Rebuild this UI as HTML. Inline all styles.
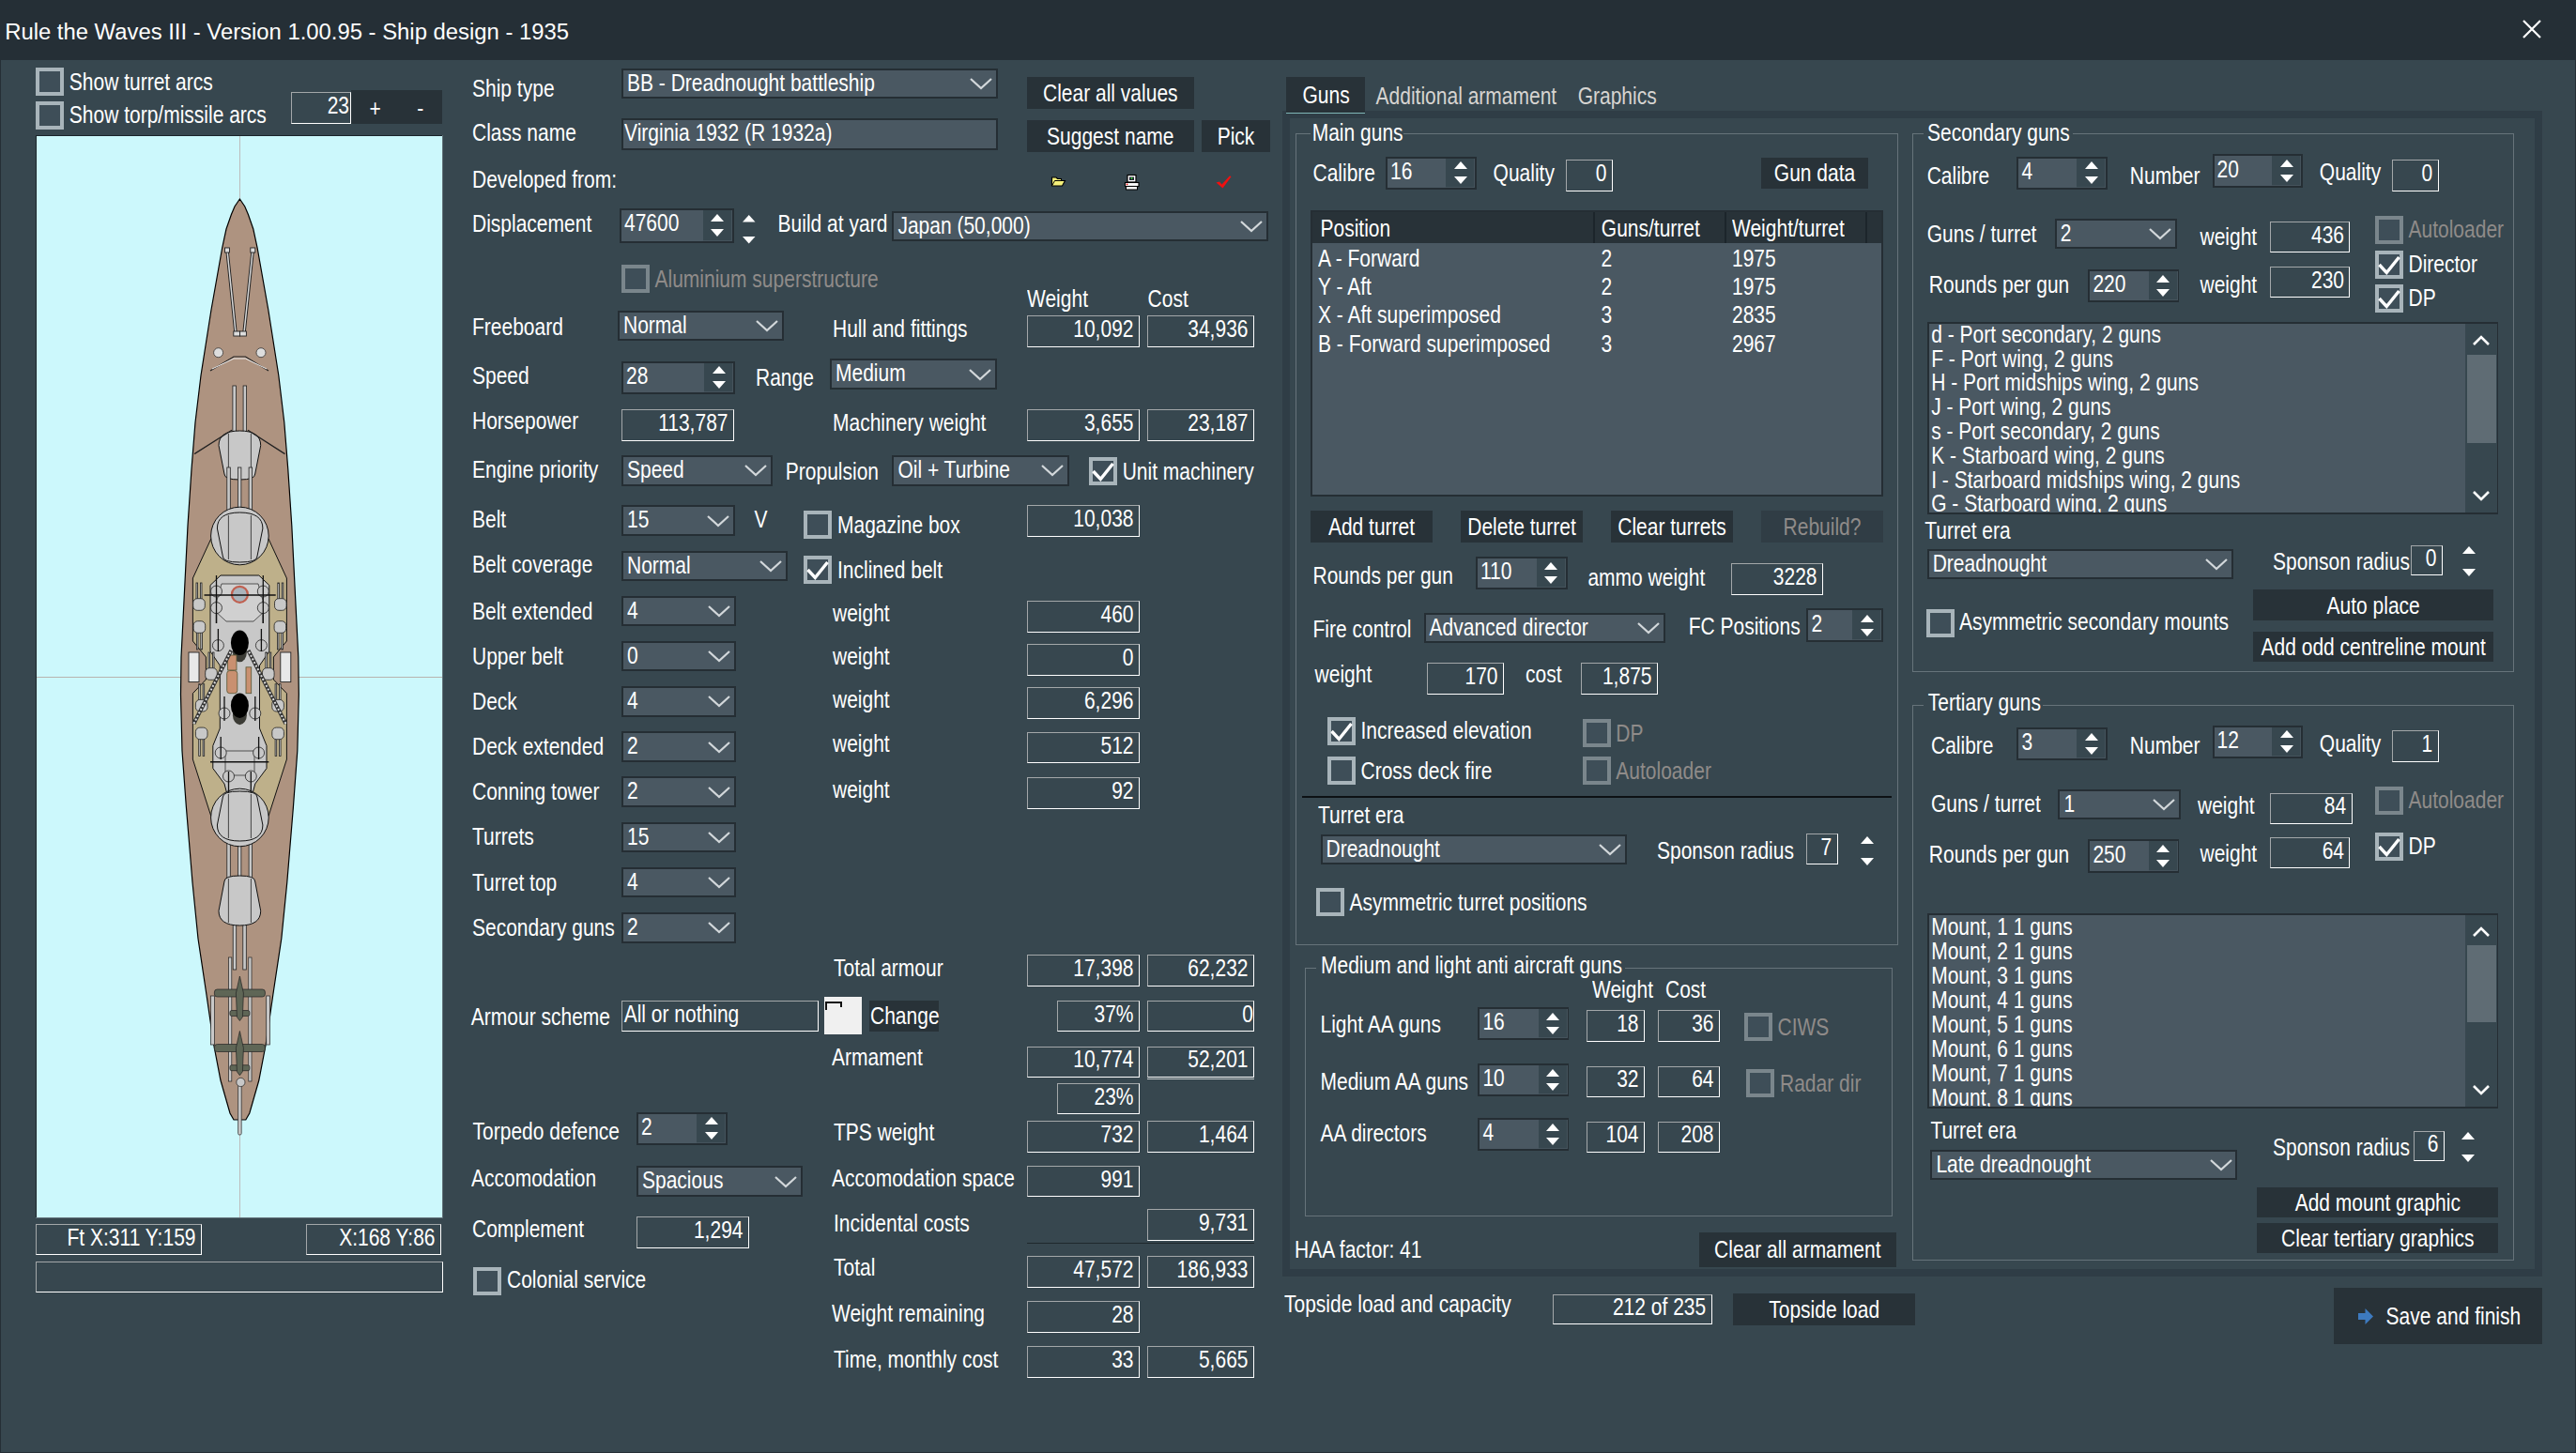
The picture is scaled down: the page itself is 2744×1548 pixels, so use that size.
<!DOCTYPE html>
<html><head><meta charset="utf-8"><style>
html,body{margin:0;padding:0;width:2744px;height:1548px;overflow:hidden;background:#37474f;font-family:"Liberation Sans",sans-serif}
.r{position:absolute;box-sizing:border-box}
.t{position:absolute;white-space:pre}
svg.r{overflow:visible}
</style></head><body>
<div class="r" style="left:0.0px;top:0.0px;width:2744.0px;height:64.0px;background:#252f36;"></div>
<div class="r" style="left:0.0px;top:64.0px;width:1.0px;height:1484.0px;background:#252f36;"></div>
<div class="r" style="left:2743.0px;top:64.0px;width:1.0px;height:1484.0px;background:#252f36;"></div>
<div class="r" style="left:0.0px;top:1547.0px;width:2744.0px;height:1.0px;background:#252f36;"></div>
<div class="t" style="left:5.2px;top:21.6px;color:#fff;font-size:23.85px;line-height:24px;transform-origin:0 20.3px;transform:scaleY(1.0)">Rule the Waves III - Version 1.00.95 - Ship design - 1935</div>
<svg class="r" style="left:2687px;top:21px" width="20" height="20"><path d="M1,1 L19,19 M19,1 L1,19" stroke="#fff" stroke-width="2.2"/></svg>
<div class="r" style="left:38.0px;top:72.0px;width:30.0px;height:30.0px;background:#3e4e58;border:4px solid #a8b4ba;"></div>
<div class="t" style="left:73.8px;top:76.5px;color:#fff;font-size:21px;line-height:24px;transform-origin:0 19.3px;transform:scaleY(1.2)">Show turret arcs</div>
<div class="r" style="left:38.0px;top:108.0px;width:30.0px;height:30.0px;background:#3e4e58;border:4px solid #a8b4ba;"></div>
<div class="t" style="left:73.8px;top:112.3px;color:#fff;font-size:21px;line-height:24px;transform-origin:0 19.3px;transform:scaleY(1.2)">Show torp/missile arcs</div>
<div class="r" style="left:373.8px;top:95.8px;width:97.7px;height:35.8px;background:#283238;"></div>
<div class="r" style="left:310.0px;top:98.0px;width:64.0px;height:33.6px;border:1px solid #fff;border-top-color:#a3a7a9;border-left-color:#a3a7a9"></div>
<div class="t" style="left:-228.0px;width:600px;text-align:right;top:101.7px;color:#fff;font-size:21px;line-height:24px;transform-origin:0 19.3px;transform:scaleY(1.2)">23</div>
<div class="t" style="left:99.7px;width:600px;text-align:center;top:104.7px;color:#fff;font-size:21px;line-height:24px;transform-origin:0 19.3px;transform:scaleY(1.2)">+</div>
<div class="t" style="left:147.8px;width:600px;text-align:center;top:104.7px;color:#fff;font-size:21px;line-height:24px;transform-origin:0 19.3px;transform:scaleY(1.2)">-</div>
<div class="r" style="left:38px;top:144px;width:434px;height:1154px;background:#5f6f77"></div>
<div class="r" style="left:38px;top:144px;width:433px;height:1153px;background:#1a242a"></div>
<div class="r" style="left:39px;top:145px;width:432px;height:1152px;background:#ccf8fc"></div>
<div class="r" style="left:39px;top:720.5px;width:432px;height:1px;background:#b8b4ae"></div>
<div class="r" style="left:254.9px;top:145px;width:1px;height:1152px;background:#bcbcbc"></div>
<svg class="r" style="left:0;top:0" width="2744" height="1548">
<path d="M255.4,212.0 L250.0,220.0 L246.4,228.5 L241.0,244.0 L236.7,264.0 L225.0,330.0 L214.0,400.0 L208.0,450.0 L204.0,500.0 L200.0,560.0 L196.5,630.0 L193.0,700.0 L192.5,740.0 L194.0,800.0 L198.4,860.0 L205.0,940.0 L211.0,1000.0 L220.0,1060.0 L227.7,1113.0 L235.0,1151.0 L241.0,1172.0 L245.0,1186.0 L249.0,1193.0 L261.8,1193.0 L265.8,1186.0 L269.8,1172.0 L275.8,1151.0 L283.1,1113.0 L290.8,1060.0 L299.8,1000.0 L305.8,940.0 L312.4,860.0 L316.8,800.0 L318.3,740.0 L317.8,700.0 L314.3,630.0 L310.8,560.0 L306.8,500.0 L302.8,450.0 L296.8,400.0 L285.8,330.0 L274.1,264.0 L269.8,244.0 L264.4,228.5 L260.8,220.0 L255.4,212.0 Z" fill="#ae9380" stroke="#000" stroke-width="1.2"/>
<path d="M224.8,574.0 L205.4,616.0 L205.4,683.0 L219.4,700.0 L219.4,724.0 L205.4,738.7 L205.4,809.0 L224.8,869.5 L286.0,869.5 L305.4,809.0 L305.4,738.7 L291.4,724.0 L291.4,700.0 L305.4,683.0 L305.4,616.0 L286.0,574.0 Z" fill="#beb08a" stroke="#111" stroke-width="1"/>
<path d="M235.0,613.0 L224.0,623.5 L224.0,694.0 L234.3,709.0 L234.3,776.0 L226.8,794.5 L226.8,818.6 L239.0,835.0 L243.0,850.0 L267.8,850.0 L271.8,835.0 L284.0,818.6 L284.0,794.5 L276.5,776.0 L276.5,709.0 L286.8,694.0 L286.8,623.5 L275.8,613.0 Z" fill="#c8c8c8" stroke="#111" stroke-width="1"/>
<path d="M236,622 L275,622 L283,650 L270,662 L241,662 L228,650 Z" fill="#d0d0d0" stroke="#333" stroke-width="0.8"/>
<rect x="240" y="800" width="31" height="26" fill="none" stroke="#333" stroke-width="0.8"/>
<path d="M224,811.7 L286.3,811.7" stroke="#111" stroke-width="1.5"/>
<rect x="247.9" y="411.0" width="3.5" height="54.0" fill="#c8c8c8" stroke="#222" stroke-width="0.8"/><rect x="259.1" y="411.0" width="3.5" height="54.0" fill="#c8c8c8" stroke="#222" stroke-width="0.8"/>
<path d="M233,474.6 Q233,459 255.4,459 Q277.7,459 277.7,474.6 L271.7,505 Q271.7,511 255.4,511 Q239,511 239,505 Z" fill="#c8c8c8" stroke="#111" stroke-width="1"/><line x1="243.4" y1="462" x2="243.4" y2="508" stroke="#222" stroke-width="0.8"/><line x1="267.4" y1="462" x2="267.4" y2="508" stroke="#222" stroke-width="0.8"/>
<rect x="241.8" y="498.0" width="3.5" height="50.0" fill="#c8c8c8" stroke="#222" stroke-width="0.8"/><rect x="253.4" y="498.0" width="3.5" height="50.0" fill="#c8c8c8" stroke="#222" stroke-width="0.8"/><rect x="265.1" y="498.0" width="3.5" height="50.0" fill="#c8c8c8" stroke="#222" stroke-width="0.8"/>
<circle cx="255.4" cy="571" r="30.8" fill="#c8c8c8" stroke="#111" stroke-width="1"/>
<path d="M231.4,563.0 Q231.4,546 255.4,546 Q279.9,546 279.9,563.0 L273.9,593 Q273.9,599 255.4,599 Q237.4,599 237.4,593 Z" fill="#c8c8c8" stroke="#111" stroke-width="1"/><line x1="243.4" y1="549" x2="243.4" y2="596" stroke="#222" stroke-width="0.8"/><line x1="267.4" y1="549" x2="267.4" y2="596" stroke="#222" stroke-width="0.8"/>
<rect x="241.8" y="892.0" width="3.5" height="52.0" fill="#c8c8c8" stroke="#222" stroke-width="0.8"/><rect x="253.4" y="892.0" width="3.5" height="52.0" fill="#c8c8c8" stroke="#222" stroke-width="0.8"/><rect x="265.1" y="892.0" width="3.5" height="52.0" fill="#c8c8c8" stroke="#222" stroke-width="0.8"/>
<circle cx="255.4" cy="871" r="30.8" fill="#c8c8c8" stroke="#111" stroke-width="1"/>
<path d="M231.4,879.0 Q231.4,896 255.4,896 Q279.9,896 279.9,879.0 L273.9,849 Q273.9,843 255.4,843 Q237.4,843 237.4,849 Z" fill="#c8c8c8" stroke="#111" stroke-width="1"/><line x1="243.4" y1="846" x2="243.4" y2="893" stroke="#222" stroke-width="0.8"/><line x1="267.4" y1="846" x2="267.4" y2="893" stroke="#222" stroke-width="0.8"/>
<rect x="248.2" y="980.0" width="3.5" height="53.0" fill="#c8c8c8" stroke="#222" stroke-width="0.8"/><rect x="258.8" y="980.0" width="3.5" height="53.0" fill="#c8c8c8" stroke="#222" stroke-width="0.8"/>
<path d="M233,970.4 Q233,986 255.4,986 Q277.7,986 277.7,970.4 L271.7,939 Q271.7,933 255.4,933 Q239,933 239,939 Z" fill="#c8c8c8" stroke="#111" stroke-width="1"/><line x1="243.4" y1="936" x2="243.4" y2="983" stroke="#222" stroke-width="0.8"/><line x1="267.4" y1="936" x2="267.4" y2="983" stroke="#222" stroke-width="0.8"/>
<path d="M242,266.7 L251,354.5 M269.2,266.7 L260,354.5" stroke="#222" stroke-width="3.4" fill="none"/><path d="M242,266.7 L251,354.5 M269.2,266.7 L260,354.5" stroke="#d8d8d8" stroke-width="1.5" fill="none"/>
<rect x="239.5" y="264" width="5" height="5" fill="#ddd" stroke="#222" stroke-width="0.9"/><rect x="266.8" y="264" width="5" height="5" fill="#ddd" stroke="#222" stroke-width="0.9"/><rect x="248.8" y="353" width="6.7" height="5" fill="#ddd" stroke="#222" stroke-width="0.9"/><rect x="255.5" y="353" width="6.9" height="5" fill="#ddd" stroke="#222" stroke-width="0.9"/>
<circle cx="232.6" cy="375.7" r="5" fill="#ddd" stroke="#333" stroke-width="0.8"/><circle cx="278" cy="375.7" r="5" fill="#ddd" stroke="#333" stroke-width="0.8"/>
<path d="M224,395 L249,380 L261.5,380 L286,395" stroke="#222" stroke-width="1.2" fill="none"/><path d="M226,393 L249,382 L261.5,382 L284,393" stroke="#eee" stroke-width="1" fill="none"/>
<path d="M207,483.6 L247,458.3 M303.5,483.6 L264,458.3" stroke="#222" stroke-width="1.3" fill="none"/>
<circle cx="255.4" cy="633.3" r="8.5" fill="#aab4bc" stroke="#c06050" stroke-width="2.2"/>
<ellipse cx="255.4" cy="694.8" rx="7.5" ry="10.5" fill="#3b3b35"/><ellipse cx="255.4" cy="684.8" rx="9.5" ry="13.2" fill="#000"/>
<ellipse cx="255.4" cy="761.7" rx="7.5" ry="10.5" fill="#3b3b35"/><ellipse cx="255.4" cy="751.7" rx="9.5" ry="13.2" fill="#000"/>
<rect x="242.6" y="698" width="9.4" height="16" fill="#c99070" stroke="#553" stroke-width="0.8"/><rect x="241.7" y="714.5" width="11.1" height="24.2" rx="3" fill="#c99070" stroke="#553" stroke-width="0.8"/><rect x="262" y="710.8" width="5.7" height="27.9" fill="#c99070" stroke="#553" stroke-width="0.8"/>
<rect x="209.0" y="621.0" width="1.6" height="19.0" fill="#c8c8c8" stroke="#222" stroke-width="0.8"/><rect x="213.4" y="621.0" width="1.6" height="19.0" fill="#c8c8c8" stroke="#222" stroke-width="0.8"/>
<rect x="205.7" y="637.7" width="12.6" height="12.6" rx="4.5" fill="#c8c8c8" stroke="#222" stroke-width="0.8"/>
<rect x="209.4" y="672.0" width="1.6" height="20.0" fill="#c8c8c8" stroke="#222" stroke-width="0.8"/><rect x="213.8" y="672.0" width="1.6" height="20.0" fill="#c8c8c8" stroke="#222" stroke-width="0.8"/>
<rect x="206.1" y="661.7" width="12.6" height="12.6" rx="4.5" fill="#c8c8c8" stroke="#222" stroke-width="0.8"/>
<rect x="222.0" y="695.0" width="1.6" height="19.0" fill="#c8c8c8" stroke="#222" stroke-width="0.8"/><rect x="226.4" y="695.0" width="1.6" height="19.0" fill="#c8c8c8" stroke="#222" stroke-width="0.8"/>
<rect x="218.7" y="711.7" width="12.6" height="12.6" rx="4.5" fill="#c8c8c8" stroke="#222" stroke-width="0.8"/>
<rect x="211.7" y="728.7" width="1.6" height="19.0" fill="#c8c8c8" stroke="#222" stroke-width="0.8"/><rect x="216.1" y="728.7" width="1.6" height="19.0" fill="#c8c8c8" stroke="#222" stroke-width="0.8"/>
<rect x="208.39999999999998" y="745.4000000000001" width="12.6" height="12.6" rx="4.5" fill="#c8c8c8" stroke="#222" stroke-width="0.8"/>
<rect x="211.7" y="785.4" width="1.6" height="20.0" fill="#c8c8c8" stroke="#222" stroke-width="0.8"/><rect x="216.1" y="785.4" width="1.6" height="20.0" fill="#c8c8c8" stroke="#222" stroke-width="0.8"/>
<rect x="208.39999999999998" y="775.1" width="12.6" height="12.6" rx="4.5" fill="#c8c8c8" stroke="#222" stroke-width="0.8"/>
<circle cx="230.5" cy="630" r="6" fill="#c8c8c8" stroke="#222" stroke-width="0.8"/>
<line x1="230.5" y1="613" x2="230.5" y2="664" stroke="#111" stroke-width="1.3"/>
<circle cx="230.5" cy="647.6" r="6" fill="#c8c8c8" stroke="#222" stroke-width="0.8"/>
<line x1="230.5" y1="640" x2="230.5" y2="664" stroke="#111" stroke-width="1.3"/>
<circle cx="232.4" cy="687.6" r="6" fill="#c8c8c8" stroke="#222" stroke-width="0.8"/>
<line x1="232.4" y1="670" x2="232.4" y2="694" stroke="#111" stroke-width="1.3"/>
<circle cx="239.0" cy="760" r="6" fill="#c8c8c8" stroke="#222" stroke-width="0.8"/>
<line x1="239.0" y1="742" x2="239.0" y2="768" stroke="#111" stroke-width="1.3"/>
<circle cx="235.20000000000002" cy="802" r="6" fill="#c8c8c8" stroke="#222" stroke-width="0.8"/>
<line x1="235.20000000000002" y1="785" x2="235.20000000000002" y2="809" stroke="#111" stroke-width="1.3"/>
<circle cx="243.5" cy="827" r="6" fill="#c8c8c8" stroke="#222" stroke-width="0.8"/>
<line x1="243.5" y1="822" x2="243.5" y2="844.6" stroke="#111" stroke-width="1.3"/>
<rect x="201.0" y="695" width="11" height="31.6" fill="#e8e8e8" stroke="#222" stroke-width="0.9"/>
<path d="M206.4,771 L246.3,693" stroke="#333" stroke-width="4"/><path d="M206.4,771 L246.3,693" stroke="#ddd" stroke-width="2" stroke-dasharray="2,2"/>
<rect x="295.8" y="621.0" width="1.6" height="19.0" fill="#c8c8c8" stroke="#222" stroke-width="0.8"/><rect x="300.2" y="621.0" width="1.6" height="19.0" fill="#c8c8c8" stroke="#222" stroke-width="0.8"/>
<rect x="292.5" y="637.7" width="12.6" height="12.6" rx="4.5" fill="#c8c8c8" stroke="#222" stroke-width="0.8"/>
<rect x="295.4" y="672.0" width="1.6" height="20.0" fill="#c8c8c8" stroke="#222" stroke-width="0.8"/><rect x="299.8" y="672.0" width="1.6" height="20.0" fill="#c8c8c8" stroke="#222" stroke-width="0.8"/>
<rect x="292.09999999999997" y="661.7" width="12.6" height="12.6" rx="4.5" fill="#c8c8c8" stroke="#222" stroke-width="0.8"/>
<rect x="282.8" y="695.0" width="1.6" height="19.0" fill="#c8c8c8" stroke="#222" stroke-width="0.8"/><rect x="287.2" y="695.0" width="1.6" height="19.0" fill="#c8c8c8" stroke="#222" stroke-width="0.8"/>
<rect x="279.5" y="711.7" width="12.6" height="12.6" rx="4.5" fill="#c8c8c8" stroke="#222" stroke-width="0.8"/>
<rect x="293.1" y="728.7" width="1.6" height="19.0" fill="#c8c8c8" stroke="#222" stroke-width="0.8"/><rect x="297.5" y="728.7" width="1.6" height="19.0" fill="#c8c8c8" stroke="#222" stroke-width="0.8"/>
<rect x="289.8" y="745.4000000000001" width="12.6" height="12.6" rx="4.5" fill="#c8c8c8" stroke="#222" stroke-width="0.8"/>
<rect x="293.1" y="785.4" width="1.6" height="20.0" fill="#c8c8c8" stroke="#222" stroke-width="0.8"/><rect x="297.5" y="785.4" width="1.6" height="20.0" fill="#c8c8c8" stroke="#222" stroke-width="0.8"/>
<rect x="289.8" y="775.1" width="12.6" height="12.6" rx="4.5" fill="#c8c8c8" stroke="#222" stroke-width="0.8"/>
<circle cx="280.3" cy="630" r="6" fill="#c8c8c8" stroke="#222" stroke-width="0.8"/>
<line x1="280.3" y1="613" x2="280.3" y2="664" stroke="#111" stroke-width="1.3"/>
<circle cx="280.3" cy="647.6" r="6" fill="#c8c8c8" stroke="#222" stroke-width="0.8"/>
<line x1="280.3" y1="640" x2="280.3" y2="664" stroke="#111" stroke-width="1.3"/>
<circle cx="278.4" cy="687.6" r="6" fill="#c8c8c8" stroke="#222" stroke-width="0.8"/>
<line x1="278.4" y1="670" x2="278.4" y2="694" stroke="#111" stroke-width="1.3"/>
<circle cx="271.8" cy="760" r="6" fill="#c8c8c8" stroke="#222" stroke-width="0.8"/>
<line x1="271.8" y1="742" x2="271.8" y2="768" stroke="#111" stroke-width="1.3"/>
<circle cx="275.6" cy="802" r="6" fill="#c8c8c8" stroke="#222" stroke-width="0.8"/>
<line x1="275.6" y1="785" x2="275.6" y2="809" stroke="#111" stroke-width="1.3"/>
<circle cx="267.3" cy="827" r="6" fill="#c8c8c8" stroke="#222" stroke-width="0.8"/>
<line x1="267.3" y1="822" x2="267.3" y2="844.6" stroke="#111" stroke-width="1.3"/>
<rect x="298.8" y="695" width="11" height="31.6" fill="#e8e8e8" stroke="#222" stroke-width="0.9"/>
<path d="M304.4,771 L264.5,693" stroke="#333" stroke-width="4"/><path d="M304.4,771 L264.5,693" stroke="#ddd" stroke-width="2" stroke-dasharray="2,2"/>
<path d="M217.5,634 L293.7,634" stroke="#111" stroke-width="1.5"/>
<rect x="243.6" y="1020" width="3.2" height="132" fill="#c8c8c8" stroke="#222" stroke-width="0.7"/><rect x="264.8" y="1020" width="3.2" height="132" fill="#c8c8c8" stroke="#222" stroke-width="0.7"/>
<rect x="224.6" y="1061" width="3.8" height="52" fill="#c8c8c8" stroke="#222" stroke-width="0.7"/><rect x="283.7" y="1061" width="3.8" height="52" fill="#c8c8c8" stroke="#222" stroke-width="0.7"/>
<rect x="228.4" y="1054" width="54" height="8" rx="3" fill="#5f6656" stroke="#222" stroke-width="0.7"/>
<rect x="244.9" y="1076.5" width="21.0" height="6" rx="2" fill="#5f6656" stroke="#222" stroke-width="0.7"/>
<path d="M255.4,1040 L259.4,1058 L258.4,1083.5 L255.4,1087.5 L252.4,1083.5 L251.4,1058 Z" fill="#5f6656" stroke="#222" stroke-width="0.7"/>
<rect x="228.4" y="1112.5" width="54" height="8" rx="3" fill="#5f6656" stroke="#222" stroke-width="0.7"/>
<rect x="244.9" y="1134.7" width="21.0" height="6" rx="2" fill="#5f6656" stroke="#222" stroke-width="0.7"/>
<path d="M255.4,1098.5 L259.4,1116.5 L258.4,1141.7 L255.4,1145.7 L252.4,1141.7 L251.4,1116.5 Z" fill="#5f6656" stroke="#222" stroke-width="0.7"/>
<rect x="253.6" y="1152" width="3.6" height="57" rx="1.5" fill="#c8c8c8" stroke="#222" stroke-width="0.7"/><circle cx="256.4" cy="1153" r="4.6" fill="#c8c8c8" stroke="#222" stroke-width="0.7"/>
</svg>
<div class="r" style="left:38.0px;top:1304.0px;width:177.0px;height:33.0px;border:1px solid #fff;border-top-color:#a3a7a9;border-left-color:#a3a7a9"></div>
<div class="t" style="left:-391.5px;width:600px;text-align:right;top:1307.7px;color:#fff;font-size:21px;line-height:24px;transform-origin:0 19.3px;transform:scaleY(1.2)">Ft X:311 Y:159</div>
<div class="r" style="left:326.0px;top:1304.0px;width:144.0px;height:33.0px;border:1px solid #fff;border-top-color:#a3a7a9;border-left-color:#a3a7a9"></div>
<div class="t" style="left:-136.5px;width:600px;text-align:right;top:1307.7px;color:#fff;font-size:21px;line-height:24px;transform-origin:0 19.3px;transform:scaleY(1.2)">X:168 Y:86</div>
<div class="r" style="left:38.0px;top:1344.0px;width:434.0px;height:33.0px;border:1px solid #fff;border-top-color:#a3a7a9;border-left-color:#a3a7a9"></div>
<div class="t" style="left:503.0px;top:83.7px;color:#fff;font-size:21px;line-height:24px;transform-origin:0 19.3px;transform:scaleY(1.2)">Ship type</div>
<div class="r" style="left:662.0px;top:72.7px;width:401.0px;height:32.3px;background:#4a5862;border:2px solid #252e34;"></div>
<div class="t" style="left:668.0px;top:77.7px;color:#fff;font-size:21px;line-height:24px;transform-origin:0 19.3px;transform:scaleY(1.2)">BB - Dreadnought battleship</div>
<svg class="r" style="left:1033.0px;top:82.8px" width="24" height="12"><path d="M1,1 L12.0,11 L23,1" fill="none" stroke="#d3d8db" stroke-width="2.2"/></svg>
<div class="r" style="left:1094.0px;top:82.0px;width:177.5px;height:33.7px;background:#283238;"></div>
<div class="t" style="left:882.8px;width:600px;text-align:center;top:88.6px;color:#fff;font-size:21px;line-height:24px;transform-origin:0 19.3px;transform:scaleY(1.2)">Clear all values</div>
<div class="t" style="left:503.0px;top:130.7px;color:#fff;font-size:21px;line-height:24px;transform-origin:0 19.3px;transform:scaleY(1.2)">Class name</div>
<div class="r" style="left:662.0px;top:126.4px;width:401.0px;height:33.4px;background:#4a5862;border:2px solid #252e34;"></div>
<div class="t" style="left:665.0px;top:131.2px;color:#fff;font-size:21px;line-height:24px;transform-origin:0 19.3px;transform:scaleY(1.2)">Virginia 1932 (R 1932a)</div>
<div class="r" style="left:1094.0px;top:128.0px;width:177.5px;height:33.5px;background:#283238;"></div>
<div class="t" style="left:882.8px;width:600px;text-align:center;top:134.5px;color:#fff;font-size:21px;line-height:24px;transform-origin:0 19.3px;transform:scaleY(1.2)">Suggest name</div>
<div class="r" style="left:1280.0px;top:128.0px;width:73.0px;height:33.5px;background:#283238;"></div>
<div class="t" style="left:1016.5px;width:600px;text-align:center;top:134.5px;color:#fff;font-size:21px;line-height:24px;transform-origin:0 19.3px;transform:scaleY(1.2)">Pick</div>
<div class="t" style="left:503.0px;top:180.7px;color:#fff;font-size:21px;line-height:24px;transform-origin:0 19.3px;transform:scaleY(1.2)">Developed from:</div>
<svg class="r" style="left:1119.5px;top:187.5px" width="16" height="11"><path d="M0.5,1 L5,1 L6.5,2.5 L10.5,2.5 L10.5,4.5 L14.5,4.5 L11.5,10 L0.5,10 Z" fill="#f4f07a" stroke="#000" stroke-width="1.1"/><path d="M0.8,9.5 L3.5,4.5 L14.5,4.5" fill="none" stroke="#000" stroke-width="1"/></svg>
<svg class="r" style="left:1198px;top:186px" width="16" height="17"><rect x="3" y="0.5" width="9" height="7.5" fill="#fff" stroke="#000" stroke-width="1.2"/><rect x="5" y="2.5" width="5" height="3.5" fill="#223"/><circle cx="7.5" cy="4" r="1" fill="#3c3"/><rect x="0.5" y="8.5" width="14.5" height="4" fill="#fff" stroke="#000" stroke-width="1.1"/><circle cx="2.6" cy="10.3" r="0.9" fill="#e00"/><rect x="1.5" y="12.5" width="12" height="3.5" fill="#fff" stroke="#000" stroke-width="1"/></svg>
<svg class="r" style="left:1294.5px;top:186.5px" width="17" height="14"><path d="M0.5,7.5 L4,6.5 L6.5,9.5 L15,0.3 L16.5,1.2 L7.5,13.5 Z" fill="#f01010"/></svg>
<div class="t" style="left:503.0px;top:228.2px;color:#fff;font-size:21px;line-height:24px;transform-origin:0 19.3px;transform:scaleY(1.2)">Displacement</div>
<div class="r" style="left:660.0px;top:222.1px;width:121.7px;height:36.7px;background:#4a5862;border:2px solid #252e34;"></div>
<div class="r" style="left:748.7px;top:224.1px;width:31.0px;height:32.7px;background:#37474f;box-shadow:inset -1px -1px 0 #45535c;"></div>
<div class="t" style="left:665.0px;top:227.3px;color:#fff;font-size:21px;line-height:24px;transform-origin:0 19.3px;transform:scaleY(1.2)">47600</div>
<svg class="r" style="left:757.2px;top:228.4px" width="14" height="8"><path d="M0,8 L7.0,0 L14,8 Z" fill="#fff"/></svg>
<svg class="r" style="left:757.2px;top:243.9px" width="14" height="8"><path d="M0,0 L7.0,8 L14,0 Z" fill="#fff"/></svg>
<svg class="r" style="left:790.6px;top:228.8px" width="13.5" height="7.5"><path d="M0,7.5 L6.75,0 L13.5,7.5 Z" fill="#fff"/></svg>
<svg class="r" style="left:790.6px;top:251.6px" width="13.5" height="7.5"><path d="M0,0 L6.75,7.5 L13.5,0 Z" fill="#fff"/></svg>
<div class="t" style="left:828.6px;top:228.2px;color:#fff;font-size:21px;line-height:24px;transform-origin:0 19.3px;transform:scaleY(1.2)">Build at yard</div>
<div class="r" style="left:950.4px;top:225.0px;width:400.2px;height:32.0px;background:#4a5862;border:2px solid #252e34;"></div>
<div class="t" style="left:956.4px;top:230.0px;color:#fff;font-size:21px;line-height:24px;transform-origin:0 19.3px;transform:scaleY(1.2)">Japan (50,000)</div>
<svg class="r" style="left:1320.6px;top:235.0px" width="24" height="12"><path d="M1,1 L12.0,11 L23,1" fill="none" stroke="#d3d8db" stroke-width="2.2"/></svg>
<div class="r" style="left:662.0px;top:282.0px;width:30.0px;height:30.0px;background:#3e4e58;border:4px solid #7a868c;"></div>
<div class="t" style="left:697.5px;top:286.7px;color:#8f8b89;font-size:21px;line-height:24px;transform-origin:0 19.3px;transform:scaleY(1.2)">Aluminium superstructure</div>
<div class="t" style="left:1094.0px;top:307.9px;color:#fff;font-size:21px;line-height:24px;transform-origin:0 19.3px;transform:scaleY(1.2)">Weight</div>
<div class="t" style="left:1222.6px;top:307.9px;color:#fff;font-size:21px;line-height:24px;transform-origin:0 19.3px;transform:scaleY(1.2)">Cost</div>
<div class="t" style="left:503.0px;top:338.4px;color:#fff;font-size:21px;line-height:24px;transform-origin:0 19.3px;transform:scaleY(1.2)">Freeboard</div>
<div class="r" style="left:658.0px;top:330.8px;width:177.0px;height:32.7px;background:#4a5862;border:2px solid #252e34;"></div>
<div class="t" style="left:664.0px;top:335.8px;color:#fff;font-size:21px;line-height:24px;transform-origin:0 19.3px;transform:scaleY(1.2)">Normal</div>
<svg class="r" style="left:805.0px;top:341.1px" width="24" height="12"><path d="M1,1 L12.0,11 L23,1" fill="none" stroke="#d3d8db" stroke-width="2.2"/></svg>
<div class="t" style="left:887.0px;top:339.5px;color:#fff;font-size:21px;line-height:24px;transform-origin:0 19.3px;transform:scaleY(1.2)">Hull and fittings</div>
<div class="r" style="left:1094.0px;top:336.0px;width:120.0px;height:34.0px;border:1px solid #fff;border-top-color:#a3a7a9;border-left-color:#a3a7a9"></div>
<div class="t" style="left:607.5px;width:600px;text-align:right;top:339.7px;color:#fff;font-size:21px;line-height:24px;transform-origin:0 19.3px;transform:scaleY(1.2)">10,092</div>
<div class="r" style="left:1222.0px;top:336.0px;width:114.0px;height:34.0px;border:1px solid #fff;border-top-color:#a3a7a9;border-left-color:#a3a7a9"></div>
<div class="t" style="left:729.5px;width:600px;text-align:right;top:339.7px;color:#fff;font-size:21px;line-height:24px;transform-origin:0 19.3px;transform:scaleY(1.2)">34,936</div>
<div class="t" style="left:503.0px;top:389.7px;color:#fff;font-size:21px;line-height:24px;transform-origin:0 19.3px;transform:scaleY(1.2)">Speed</div>
<div class="r" style="left:662.0px;top:384.5px;width:121.0px;height:35.8px;background:#4a5862;border:2px solid #252e34;"></div>
<div class="r" style="left:750.0px;top:386.5px;width:31.0px;height:31.8px;background:#37474f;box-shadow:inset -1px -1px 0 #45535c;"></div>
<div class="t" style="left:667.0px;top:389.7px;color:#fff;font-size:21px;line-height:24px;transform-origin:0 19.3px;transform:scaleY(1.2)">28</div>
<svg class="r" style="left:758.5px;top:390.4px" width="14" height="8"><path d="M0,8 L7.0,0 L14,8 Z" fill="#fff"/></svg>
<svg class="r" style="left:758.5px;top:405.9px" width="14" height="8"><path d="M0,0 L7.0,8 L14,0 Z" fill="#fff"/></svg>
<div class="t" style="left:805.0px;top:392.4px;color:#fff;font-size:21px;line-height:24px;transform-origin:0 19.3px;transform:scaleY(1.2)">Range</div>
<div class="r" style="left:884.0px;top:382.4px;width:177.5px;height:32.6px;background:#4a5862;border:2px solid #252e34;"></div>
<div class="t" style="left:890.0px;top:387.4px;color:#fff;font-size:21px;line-height:24px;transform-origin:0 19.3px;transform:scaleY(1.2)">Medium</div>
<svg class="r" style="left:1031.5px;top:392.7px" width="24" height="12"><path d="M1,1 L12.0,11 L23,1" fill="none" stroke="#d3d8db" stroke-width="2.2"/></svg>
<div class="t" style="left:503.0px;top:438.2px;color:#fff;font-size:21px;line-height:24px;transform-origin:0 19.3px;transform:scaleY(1.2)">Horsepower</div>
<div class="r" style="left:662.0px;top:436.0px;width:120.0px;height:33.5px;border:1px solid #fff;border-top-color:#a3a7a9;border-left-color:#a3a7a9"></div>
<div class="t" style="left:175.5px;width:600px;text-align:right;top:439.7px;color:#fff;font-size:21px;line-height:24px;transform-origin:0 19.3px;transform:scaleY(1.2)">113,787</div>
<div class="t" style="left:887.0px;top:439.7px;color:#fff;font-size:21px;line-height:24px;transform-origin:0 19.3px;transform:scaleY(1.2)">Machinery weight</div>
<div class="r" style="left:1094.0px;top:436.0px;width:120.0px;height:33.5px;border:1px solid #fff;border-top-color:#a3a7a9;border-left-color:#a3a7a9"></div>
<div class="t" style="left:607.5px;width:600px;text-align:right;top:439.7px;color:#fff;font-size:21px;line-height:24px;transform-origin:0 19.3px;transform:scaleY(1.2)">3,655</div>
<div class="r" style="left:1222.0px;top:436.0px;width:114.0px;height:33.5px;border:1px solid #fff;border-top-color:#a3a7a9;border-left-color:#a3a7a9"></div>
<div class="t" style="left:729.5px;width:600px;text-align:right;top:439.7px;color:#fff;font-size:21px;line-height:24px;transform-origin:0 19.3px;transform:scaleY(1.2)">23,187</div>
<div class="t" style="left:503.0px;top:489.7px;color:#fff;font-size:21px;line-height:24px;transform-origin:0 19.3px;transform:scaleY(1.2)">Engine priority</div>
<div class="r" style="left:662.0px;top:485.0px;width:161.0px;height:32.7px;background:#4a5862;border:2px solid #252e34;"></div>
<div class="t" style="left:668.0px;top:490.0px;color:#fff;font-size:21px;line-height:24px;transform-origin:0 19.3px;transform:scaleY(1.2)">Speed</div>
<svg class="r" style="left:793.0px;top:495.4px" width="24" height="12"><path d="M1,1 L12.0,11 L23,1" fill="none" stroke="#d3d8db" stroke-width="2.2"/></svg>
<div class="t" style="left:836.8px;top:491.5px;color:#fff;font-size:21px;line-height:24px;transform-origin:0 19.3px;transform:scaleY(1.2)">Propulsion</div>
<div class="r" style="left:950.4px;top:485.0px;width:188.6px;height:32.7px;background:#4a5862;border:2px solid #252e34;"></div>
<div class="t" style="left:956.4px;top:490.0px;color:#fff;font-size:21px;line-height:24px;transform-origin:0 19.3px;transform:scaleY(1.2)">Oil + Turbine</div>
<svg class="r" style="left:1109.0px;top:495.4px" width="24" height="12"><path d="M1,1 L12.0,11 L23,1" fill="none" stroke="#d3d8db" stroke-width="2.2"/></svg>
<div class="r" style="left:1160.0px;top:486.7px;width:30.0px;height:30.0px;background:#3e4e58;border:4px solid #a8b4ba;"></div>
<svg class="r" style="left:1160.0px;top:486.7px" width="30" height="30"><path d="M4.5,15 L12.3,23.5 L25.5,7" fill="none" stroke="#fff" stroke-width="3.4"/></svg>
<div class="t" style="left:1195.7px;top:491.5px;color:#fff;font-size:21px;line-height:24px;transform-origin:0 19.3px;transform:scaleY(1.2)">Unit machinery</div>
<div class="t" style="left:503.0px;top:543.1px;color:#fff;font-size:21px;line-height:24px;transform-origin:0 19.3px;transform:scaleY(1.2)">Belt</div>
<div class="r" style="left:662.0px;top:538.0px;width:121.0px;height:33.0px;background:#4a5862;border:2px solid #252e34;"></div>
<div class="t" style="left:668.0px;top:543.0px;color:#fff;font-size:21px;line-height:24px;transform-origin:0 19.3px;transform:scaleY(1.2)">15</div>
<svg class="r" style="left:753.0px;top:548.5px" width="24" height="12"><path d="M1,1 L12.0,11 L23,1" fill="none" stroke="#d3d8db" stroke-width="2.2"/></svg>
<div class="t" style="left:803.5px;top:543.1px;color:#fff;font-size:21px;line-height:24px;transform-origin:0 19.3px;transform:scaleY(1.2)">V</div>
<div class="r" style="left:856.0px;top:544.0px;width:30.0px;height:30.0px;background:#3e4e58;border:4px solid #a8b4ba;"></div>
<div class="t" style="left:892.0px;top:548.7px;color:#fff;font-size:21px;line-height:24px;transform-origin:0 19.3px;transform:scaleY(1.2)">Magazine box</div>
<div class="r" style="left:1094.0px;top:538.0px;width:120.0px;height:34.0px;border:1px solid #fff;border-top-color:#a3a7a9;border-left-color:#a3a7a9"></div>
<div class="t" style="left:607.5px;width:600px;text-align:right;top:541.7px;color:#fff;font-size:21px;line-height:24px;transform-origin:0 19.3px;transform:scaleY(1.2)">10,038</div>
<div class="t" style="left:503.0px;top:591.2px;color:#fff;font-size:21px;line-height:24px;transform-origin:0 19.3px;transform:scaleY(1.2)">Belt coverage</div>
<div class="r" style="left:662.0px;top:587.0px;width:177.0px;height:32.0px;background:#4a5862;border:2px solid #252e34;"></div>
<div class="t" style="left:668.0px;top:592.0px;color:#fff;font-size:21px;line-height:24px;transform-origin:0 19.3px;transform:scaleY(1.2)">Normal</div>
<svg class="r" style="left:809.0px;top:597.0px" width="24" height="12"><path d="M1,1 L12.0,11 L23,1" fill="none" stroke="#d3d8db" stroke-width="2.2"/></svg>
<div class="r" style="left:856.0px;top:592.0px;width:30.0px;height:30.0px;background:#3e4e58;border:4px solid #a8b4ba;"></div>
<svg class="r" style="left:856.0px;top:592.0px" width="30" height="30"><path d="M4.5,15 L12.3,23.5 L25.5,7" fill="none" stroke="#fff" stroke-width="3.4"/></svg>
<div class="t" style="left:892.0px;top:596.7px;color:#fff;font-size:21px;line-height:24px;transform-origin:0 19.3px;transform:scaleY(1.2)">Inclined belt</div>
<div class="t" style="left:503.0px;top:640.5px;color:#fff;font-size:21px;line-height:24px;transform-origin:0 19.3px;transform:scaleY(1.2)">Belt extended</div>
<div class="r" style="left:662.0px;top:634.6px;width:122.0px;height:32.7px;background:#4a5862;border:2px solid #252e34;"></div>
<div class="t" style="left:668.0px;top:639.6px;color:#fff;font-size:21px;line-height:24px;transform-origin:0 19.3px;transform:scaleY(1.2)">4</div>
<svg class="r" style="left:754.0px;top:645.0px" width="24" height="12"><path d="M1,1 L12.0,11 L23,1" fill="none" stroke="#d3d8db" stroke-width="2.2"/></svg>
<div class="t" style="left:887.0px;top:642.6px;color:#fff;font-size:21px;line-height:24px;transform-origin:0 19.3px;transform:scaleY(1.2)">weight</div>
<div class="r" style="left:1094.0px;top:640.0px;width:120.0px;height:33.6px;border:1px solid #fff;border-top-color:#a3a7a9;border-left-color:#a3a7a9"></div>
<div class="t" style="left:607.5px;width:600px;text-align:right;top:643.7px;color:#fff;font-size:21px;line-height:24px;transform-origin:0 19.3px;transform:scaleY(1.2)">460</div>
<div class="t" style="left:503.0px;top:688.7px;color:#fff;font-size:21px;line-height:24px;transform-origin:0 19.3px;transform:scaleY(1.2)">Upper belt</div>
<div class="r" style="left:662.0px;top:682.8px;width:122.0px;height:32.7px;background:#4a5862;border:2px solid #252e34;"></div>
<div class="t" style="left:668.0px;top:687.8px;color:#fff;font-size:21px;line-height:24px;transform-origin:0 19.3px;transform:scaleY(1.2)">0</div>
<svg class="r" style="left:754.0px;top:693.1px" width="24" height="12"><path d="M1,1 L12.0,11 L23,1" fill="none" stroke="#d3d8db" stroke-width="2.2"/></svg>
<div class="t" style="left:887.0px;top:688.8px;color:#fff;font-size:21px;line-height:24px;transform-origin:0 19.3px;transform:scaleY(1.2)">weight</div>
<div class="r" style="left:1094.0px;top:686.2px;width:120.0px;height:33.6px;border:1px solid #fff;border-top-color:#a3a7a9;border-left-color:#a3a7a9"></div>
<div class="t" style="left:607.5px;width:600px;text-align:right;top:689.9px;color:#fff;font-size:21px;line-height:24px;transform-origin:0 19.3px;transform:scaleY(1.2)">0</div>
<div class="t" style="left:503.0px;top:736.9px;color:#fff;font-size:21px;line-height:24px;transform-origin:0 19.3px;transform:scaleY(1.2)">Deck</div>
<div class="r" style="left:662.0px;top:731.0px;width:122.0px;height:32.7px;background:#4a5862;border:2px solid #252e34;"></div>
<div class="t" style="left:668.0px;top:736.0px;color:#fff;font-size:21px;line-height:24px;transform-origin:0 19.3px;transform:scaleY(1.2)">4</div>
<svg class="r" style="left:754.0px;top:741.3px" width="24" height="12"><path d="M1,1 L12.0,11 L23,1" fill="none" stroke="#d3d8db" stroke-width="2.2"/></svg>
<div class="t" style="left:887.0px;top:734.6px;color:#fff;font-size:21px;line-height:24px;transform-origin:0 19.3px;transform:scaleY(1.2)">weight</div>
<div class="r" style="left:1094.0px;top:732.0px;width:120.0px;height:33.6px;border:1px solid #fff;border-top-color:#a3a7a9;border-left-color:#a3a7a9"></div>
<div class="t" style="left:607.5px;width:600px;text-align:right;top:735.7px;color:#fff;font-size:21px;line-height:24px;transform-origin:0 19.3px;transform:scaleY(1.2)">6,296</div>
<div class="t" style="left:503.0px;top:785.1px;color:#fff;font-size:21px;line-height:24px;transform-origin:0 19.3px;transform:scaleY(1.2)">Deck extended</div>
<div class="r" style="left:662.0px;top:779.1px;width:122.0px;height:32.7px;background:#4a5862;border:2px solid #252e34;"></div>
<div class="t" style="left:668.0px;top:784.2px;color:#fff;font-size:21px;line-height:24px;transform-origin:0 19.3px;transform:scaleY(1.2)">2</div>
<svg class="r" style="left:754.0px;top:789.5px" width="24" height="12"><path d="M1,1 L12.0,11 L23,1" fill="none" stroke="#d3d8db" stroke-width="2.2"/></svg>
<div class="t" style="left:887.0px;top:782.4px;color:#fff;font-size:21px;line-height:24px;transform-origin:0 19.3px;transform:scaleY(1.2)">weight</div>
<div class="r" style="left:1094.0px;top:779.8px;width:120.0px;height:33.6px;border:1px solid #fff;border-top-color:#a3a7a9;border-left-color:#a3a7a9"></div>
<div class="t" style="left:607.5px;width:600px;text-align:right;top:783.5px;color:#fff;font-size:21px;line-height:24px;transform-origin:0 19.3px;transform:scaleY(1.2)">512</div>
<div class="t" style="left:503.0px;top:833.2px;color:#fff;font-size:21px;line-height:24px;transform-origin:0 19.3px;transform:scaleY(1.2)">Conning tower</div>
<div class="r" style="left:662.0px;top:827.3px;width:122.0px;height:32.7px;background:#4a5862;border:2px solid #252e34;"></div>
<div class="t" style="left:668.0px;top:832.3px;color:#fff;font-size:21px;line-height:24px;transform-origin:0 19.3px;transform:scaleY(1.2)">2</div>
<svg class="r" style="left:754.0px;top:837.7px" width="24" height="12"><path d="M1,1 L12.0,11 L23,1" fill="none" stroke="#d3d8db" stroke-width="2.2"/></svg>
<div class="t" style="left:887.0px;top:830.6px;color:#fff;font-size:21px;line-height:24px;transform-origin:0 19.3px;transform:scaleY(1.2)">weight</div>
<div class="r" style="left:1094.0px;top:828.0px;width:120.0px;height:33.6px;border:1px solid #fff;border-top-color:#a3a7a9;border-left-color:#a3a7a9"></div>
<div class="t" style="left:607.5px;width:600px;text-align:right;top:831.7px;color:#fff;font-size:21px;line-height:24px;transform-origin:0 19.3px;transform:scaleY(1.2)">92</div>
<div class="t" style="left:503.0px;top:881.4px;color:#fff;font-size:21px;line-height:24px;transform-origin:0 19.3px;transform:scaleY(1.2)">Turrets</div>
<div class="r" style="left:662.0px;top:875.5px;width:122.0px;height:32.7px;background:#4a5862;border:2px solid #252e34;"></div>
<div class="t" style="left:668.0px;top:880.5px;color:#fff;font-size:21px;line-height:24px;transform-origin:0 19.3px;transform:scaleY(1.2)">15</div>
<svg class="r" style="left:754.0px;top:885.9px" width="24" height="12"><path d="M1,1 L12.0,11 L23,1" fill="none" stroke="#d3d8db" stroke-width="2.2"/></svg>
<div class="t" style="left:503.0px;top:929.6px;color:#fff;font-size:21px;line-height:24px;transform-origin:0 19.3px;transform:scaleY(1.2)">Turret top</div>
<div class="r" style="left:662.0px;top:923.7px;width:122.0px;height:32.7px;background:#4a5862;border:2px solid #252e34;"></div>
<div class="t" style="left:668.0px;top:928.7px;color:#fff;font-size:21px;line-height:24px;transform-origin:0 19.3px;transform:scaleY(1.2)">4</div>
<svg class="r" style="left:754.0px;top:934.0px" width="24" height="12"><path d="M1,1 L12.0,11 L23,1" fill="none" stroke="#d3d8db" stroke-width="2.2"/></svg>
<div class="t" style="left:503.0px;top:977.8px;color:#fff;font-size:21px;line-height:24px;transform-origin:0 19.3px;transform:scaleY(1.2)">Secondary guns</div>
<div class="r" style="left:662.0px;top:971.9px;width:122.0px;height:32.7px;background:#4a5862;border:2px solid #252e34;"></div>
<div class="t" style="left:668.0px;top:976.9px;color:#fff;font-size:21px;line-height:24px;transform-origin:0 19.3px;transform:scaleY(1.2)">2</div>
<svg class="r" style="left:754.0px;top:982.2px" width="24" height="12"><path d="M1,1 L12.0,11 L23,1" fill="none" stroke="#d3d8db" stroke-width="2.2"/></svg>
<div class="t" style="left:888.0px;top:1020.7px;color:#fff;font-size:21px;line-height:24px;transform-origin:0 19.3px;transform:scaleY(1.2)">Total armour</div>
<div class="r" style="left:1094.0px;top:1017.0px;width:120.0px;height:33.5px;border:1px solid #fff;border-top-color:#a3a7a9;border-left-color:#a3a7a9"></div>
<div class="t" style="left:607.5px;width:600px;text-align:right;top:1020.7px;color:#fff;font-size:21px;line-height:24px;transform-origin:0 19.3px;transform:scaleY(1.2)">17,398</div>
<div class="r" style="left:1222.0px;top:1017.0px;width:114.0px;height:33.5px;border:1px solid #fff;border-top-color:#a3a7a9;border-left-color:#a3a7a9"></div>
<div class="t" style="left:729.5px;width:600px;text-align:right;top:1020.7px;color:#fff;font-size:21px;line-height:24px;transform-origin:0 19.3px;transform:scaleY(1.2)">62,232</div>
<div class="t" style="left:501.8px;top:1072.7px;color:#fff;font-size:21px;line-height:24px;transform-origin:0 19.3px;transform:scaleY(1.2)">Armour scheme</div>
<div class="r" style="left:661.7px;top:1066.0px;width:210.0px;height:33.0px;border:1px solid #fff;border-top-color:#a3a7a9;border-left-color:#a3a7a9"></div>
<div class="t" style="left:664.7px;top:1069.7px;color:#fff;font-size:21px;line-height:24px;transform-origin:0 19.3px;transform:scaleY(1.2)">All or nothing</div>
<div class="r" style="left:878.0px;top:1061.8px;width:39.8px;height:39.9px;background:#f0f0f0;"></div>
<svg class="r" style="left:879px;top:1067px" width="18" height="10"><path d="M1,9 L1,1 L17,1 L17,6" fill="none" stroke="#111" stroke-width="2"/></svg>
<div class="r" style="left:926.0px;top:1066.0px;width:74.0px;height:33.0px;background:#283238;"></div>
<div class="t" style="left:927.0px;top:1072.2px;color:#fff;font-size:21px;line-height:24px;transform-origin:0 19.3px;transform:scaleY(1.2)">Change</div>
<div class="r" style="left:1126.0px;top:1066.0px;width:88.0px;height:33.0px;border:1px solid #fff;border-top-color:#a3a7a9;border-left-color:#a3a7a9"></div>
<div class="t" style="left:607.5px;width:600px;text-align:right;top:1069.7px;color:#fff;font-size:21px;line-height:24px;transform-origin:0 19.3px;transform:scaleY(1.2)">37%</div>
<div class="r" style="left:1222.0px;top:1066.0px;width:114.0px;height:33.0px;border:1px solid #fff;border-top-color:#a3a7a9;border-left-color:#a3a7a9"></div>
<div class="t" style="left:735.0px;width:600px;text-align:right;top:1069.7px;color:#fff;font-size:21px;line-height:24px;transform-origin:0 19.3px;transform:scaleY(1.2)">0</div>
<div class="t" style="left:886.0px;top:1116.2px;color:#fff;font-size:21px;line-height:24px;transform-origin:0 19.3px;transform:scaleY(1.2)">Armament</div>
<div class="r" style="left:1094.0px;top:1114.5px;width:120.0px;height:33.0px;border:1px solid #fff;border-top-color:#a3a7a9;border-left-color:#a3a7a9"></div>
<div class="t" style="left:607.5px;width:600px;text-align:right;top:1118.2px;color:#fff;font-size:21px;line-height:24px;transform-origin:0 19.3px;transform:scaleY(1.2)">10,774</div>
<div class="r" style="left:1222.0px;top:1114.5px;width:114.0px;height:33.0px;border:1px solid #fff;border-top-color:#a3a7a9;border-left-color:#a3a7a9"></div>
<div class="t" style="left:729.5px;width:600px;text-align:right;top:1118.2px;color:#fff;font-size:21px;line-height:24px;transform-origin:0 19.3px;transform:scaleY(1.2)">52,201</div>
<div class="r" style="left:1222.0px;top:1148.5px;width:114.0px;height:1.0px;background:#c8cccf;"></div>
<div class="r" style="left:1126.0px;top:1154.4px;width:88.0px;height:33.0px;border:1px solid #fff;border-top-color:#a3a7a9;border-left-color:#a3a7a9"></div>
<div class="t" style="left:607.5px;width:600px;text-align:right;top:1158.1px;color:#fff;font-size:21px;line-height:24px;transform-origin:0 19.3px;transform:scaleY(1.2)">23%</div>
<div class="t" style="left:503.6px;top:1195.1px;color:#fff;font-size:21px;line-height:24px;transform-origin:0 19.3px;transform:scaleY(1.2)">Torpedo defence</div>
<div class="r" style="left:678.0px;top:1184.6px;width:97.4px;height:35.2px;background:#4a5862;border:2px solid #252e34;"></div>
<div class="r" style="left:742.4px;top:1186.6px;width:31.0px;height:31.2px;background:#37474f;box-shadow:inset -1px -1px 0 #45535c;"></div>
<div class="t" style="left:683.0px;top:1189.8px;color:#fff;font-size:21px;line-height:24px;transform-origin:0 19.3px;transform:scaleY(1.2)">2</div>
<svg class="r" style="left:750.9px;top:1190.2px" width="14" height="8"><path d="M0,8 L7.0,0 L14,8 Z" fill="#fff"/></svg>
<svg class="r" style="left:750.9px;top:1205.7px" width="14" height="8"><path d="M0,0 L7.0,8 L14,0 Z" fill="#fff"/></svg>
<div class="t" style="left:888.0px;top:1196.2px;color:#fff;font-size:21px;line-height:24px;transform-origin:0 19.3px;transform:scaleY(1.2)">TPS weight</div>
<div class="r" style="left:1094.0px;top:1194.4px;width:120.0px;height:33.6px;border:1px solid #fff;border-top-color:#a3a7a9;border-left-color:#a3a7a9"></div>
<div class="t" style="left:607.5px;width:600px;text-align:right;top:1198.1px;color:#fff;font-size:21px;line-height:24px;transform-origin:0 19.3px;transform:scaleY(1.2)">732</div>
<div class="r" style="left:1222.0px;top:1194.4px;width:114.0px;height:33.6px;border:1px solid #fff;border-top-color:#a3a7a9;border-left-color:#a3a7a9"></div>
<div class="t" style="left:729.5px;width:600px;text-align:right;top:1198.1px;color:#fff;font-size:21px;line-height:24px;transform-origin:0 19.3px;transform:scaleY(1.2)">1,464</div>
<div class="t" style="left:502.0px;top:1244.7px;color:#fff;font-size:21px;line-height:24px;transform-origin:0 19.3px;transform:scaleY(1.2)">Accomodation</div>
<div class="r" style="left:678.0px;top:1242.4px;width:177.3px;height:33.0px;background:#4a5862;border:2px solid #252e34;"></div>
<div class="t" style="left:684.0px;top:1247.4px;color:#fff;font-size:21px;line-height:24px;transform-origin:0 19.3px;transform:scaleY(1.2)">Spacious</div>
<svg class="r" style="left:825.3px;top:1252.9px" width="24" height="12"><path d="M1,1 L12.0,11 L23,1" fill="none" stroke="#d3d8db" stroke-width="2.2"/></svg>
<div class="t" style="left:886.0px;top:1244.7px;color:#fff;font-size:21px;line-height:24px;transform-origin:0 19.3px;transform:scaleY(1.2)">Accomodation space</div>
<div class="r" style="left:1094.0px;top:1242.4px;width:120.0px;height:33.0px;border:1px solid #fff;border-top-color:#a3a7a9;border-left-color:#a3a7a9"></div>
<div class="t" style="left:607.5px;width:600px;text-align:right;top:1246.1px;color:#fff;font-size:21px;line-height:24px;transform-origin:0 19.3px;transform:scaleY(1.2)">991</div>
<div class="t" style="left:888.0px;top:1292.5px;color:#fff;font-size:21px;line-height:24px;transform-origin:0 19.3px;transform:scaleY(1.2)">Incidental costs</div>
<div class="r" style="left:1222.0px;top:1288.0px;width:114.0px;height:33.6px;border:1px solid #fff;border-top-color:#a3a7a9;border-left-color:#a3a7a9"></div>
<div class="t" style="left:729.5px;width:600px;text-align:right;top:1291.7px;color:#fff;font-size:21px;line-height:24px;transform-origin:0 19.3px;transform:scaleY(1.2)">9,731</div>
<div class="r" style="left:1094.0px;top:1324.0px;width:242.0px;height:1.0px;background:#1f282d;"></div>
<div class="t" style="left:503.0px;top:1298.7px;color:#fff;font-size:21px;line-height:24px;transform-origin:0 19.3px;transform:scaleY(1.2)">Complement</div>
<div class="r" style="left:678.0px;top:1296.0px;width:120.0px;height:33.6px;border:1px solid #fff;border-top-color:#a3a7a9;border-left-color:#a3a7a9"></div>
<div class="t" style="left:191.5px;width:600px;text-align:right;top:1299.7px;color:#fff;font-size:21px;line-height:24px;transform-origin:0 19.3px;transform:scaleY(1.2)">1,294</div>
<div class="t" style="left:888.0px;top:1340.4px;color:#fff;font-size:21px;line-height:24px;transform-origin:0 19.3px;transform:scaleY(1.2)">Total</div>
<div class="r" style="left:1094.0px;top:1338.0px;width:120.0px;height:33.7px;border:1px solid #fff;border-top-color:#a3a7a9;border-left-color:#a3a7a9"></div>
<div class="t" style="left:607.5px;width:600px;text-align:right;top:1341.7px;color:#fff;font-size:21px;line-height:24px;transform-origin:0 19.3px;transform:scaleY(1.2)">47,572</div>
<div class="r" style="left:1222.0px;top:1338.0px;width:114.0px;height:33.7px;border:1px solid #fff;border-top-color:#a3a7a9;border-left-color:#a3a7a9"></div>
<div class="t" style="left:729.5px;width:600px;text-align:right;top:1341.7px;color:#fff;font-size:21px;line-height:24px;transform-origin:0 19.3px;transform:scaleY(1.2)">186,933</div>
<div class="r" style="left:504.0px;top:1350.0px;width:30.0px;height:30.0px;background:#3e4e58;border:4px solid #a8b4ba;"></div>
<div class="t" style="left:540.0px;top:1353.1px;color:#fff;font-size:21px;line-height:24px;transform-origin:0 19.3px;transform:scaleY(1.2)">Colonial service</div>
<div class="t" style="left:886.0px;top:1388.7px;color:#fff;font-size:21px;line-height:24px;transform-origin:0 19.3px;transform:scaleY(1.2)">Weight remaining</div>
<div class="r" style="left:1094.0px;top:1386.0px;width:120.0px;height:33.7px;border:1px solid #fff;border-top-color:#a3a7a9;border-left-color:#a3a7a9"></div>
<div class="t" style="left:607.5px;width:600px;text-align:right;top:1389.7px;color:#fff;font-size:21px;line-height:24px;transform-origin:0 19.3px;transform:scaleY(1.2)">28</div>
<div class="t" style="left:888.0px;top:1437.7px;color:#fff;font-size:21px;line-height:24px;transform-origin:0 19.3px;transform:scaleY(1.2)">Time, monthly cost</div>
<div class="r" style="left:1094.0px;top:1434.0px;width:120.0px;height:33.6px;border:1px solid #fff;border-top-color:#a3a7a9;border-left-color:#a3a7a9"></div>
<div class="t" style="left:607.5px;width:600px;text-align:right;top:1437.7px;color:#fff;font-size:21px;line-height:24px;transform-origin:0 19.3px;transform:scaleY(1.2)">33</div>
<div class="r" style="left:1222.0px;top:1434.0px;width:114.0px;height:33.6px;border:1px solid #fff;border-top-color:#a3a7a9;border-left-color:#a3a7a9"></div>
<div class="t" style="left:729.5px;width:600px;text-align:right;top:1437.7px;color:#fff;font-size:21px;line-height:24px;transform-origin:0 19.3px;transform:scaleY(1.2)">5,665</div>
<div class="r" style="left:1366.0px;top:118.0px;width:1342.0px;height:1242.0px;background:#2f3d46;"></div>
<div class="r" style="left:1374.0px;top:126.0px;width:1326.0px;height:1226.0px;background:#37474f;"></div>
<div class="r" style="left:1370.0px;top:82.0px;width:84.0px;height:38.0px;background:#283238;"></div>
<div class="r" style="left:1370.0px;top:120.0px;width:84.0px;height:1.0px;background:#7fb7b6;"></div>
<div class="t" style="left:1387.5px;top:90.7px;color:#fff;font-size:21px;line-height:24px;transform-origin:0 19.3px;transform:scaleY(1.2)">Guns</div>
<div class="t" style="left:1465.6px;top:91.7px;color:#d6d4d1;font-size:21px;line-height:24px;transform-origin:0 19.3px;transform:scaleY(1.2)">Additional armament</div>
<div class="t" style="left:1680.7px;top:91.7px;color:#d6d4d1;font-size:21px;line-height:24px;transform-origin:0 19.3px;transform:scaleY(1.2)">Graphics</div>
<div class="r" style="left:1380.0px;top:142.0px;width:16.0px;height:1.0px;background:#66737a;"></div>
<div class="r" style="left:1495.0px;top:142.0px;width:527.0px;height:1.0px;background:#66737a;"></div>
<div class="r" style="left:1380.0px;top:142.0px;width:1.0px;height:865.0px;background:#66737a;"></div>
<div class="r" style="left:2021.0px;top:142.0px;width:1.0px;height:865.0px;background:#66737a;"></div>
<div class="r" style="left:1380.0px;top:1006.0px;width:642.0px;height:1.0px;background:#66737a;"></div>
<div class="t" style="left:1397.7px;top:130.7px;color:#fff;font-size:21px;line-height:24px;transform-origin:0 19.3px;transform:scaleY(1.2)">Main guns</div>
<div class="t" style="left:1398.5px;top:174.2px;color:#fff;font-size:21px;line-height:24px;transform-origin:0 19.3px;transform:scaleY(1.2)">Calibre</div>
<div class="r" style="left:1476.0px;top:166.7px;width:97.0px;height:35.3px;background:#4a5862;border:2px solid #252e34;"></div>
<div class="r" style="left:1540.0px;top:168.7px;width:31.0px;height:31.3px;background:#37474f;box-shadow:inset -1px -1px 0 #45535c;"></div>
<div class="t" style="left:1481.0px;top:171.9px;color:#fff;font-size:21px;line-height:24px;transform-origin:0 19.3px;transform:scaleY(1.2)">16</div>
<svg class="r" style="left:1548.5px;top:172.3px" width="14" height="8"><path d="M0,8 L7.0,0 L14,8 Z" fill="#fff"/></svg>
<svg class="r" style="left:1548.5px;top:187.8px" width="14" height="8"><path d="M0,0 L7.0,8 L14,0 Z" fill="#fff"/></svg>
<div class="t" style="left:1590.6px;top:174.2px;color:#fff;font-size:21px;line-height:24px;transform-origin:0 19.3px;transform:scaleY(1.2)">Quality</div>
<div class="r" style="left:1668.0px;top:170.0px;width:50.0px;height:33.5px;border:1px solid #fff;border-top-color:#a3a7a9;border-left-color:#a3a7a9"></div>
<div class="t" style="left:1111.5px;width:600px;text-align:right;top:173.7px;color:#fff;font-size:21px;line-height:24px;transform-origin:0 19.3px;transform:scaleY(1.2)">0</div>
<div class="r" style="left:1876.0px;top:168.0px;width:114.0px;height:33.0px;background:#283238;"></div>
<div class="t" style="left:1633.0px;width:600px;text-align:center;top:174.2px;color:#fff;font-size:21px;line-height:24px;transform-origin:0 19.3px;transform:scaleY(1.2)">Gun data</div>
<div class="r" style="left:1396.0px;top:224.0px;width:610.0px;height:305.0px;background:#4a5862;border:2px solid #252e34;"></div>
<div class="r" style="left:1398.0px;top:226.0px;width:606.0px;height:33.0px;background:#283238;"></div>
<div class="r" style="left:1697.0px;top:226.0px;width:1.5px;height:33.0px;background:#1c252b;"></div>
<div class="r" style="left:1837.0px;top:226.0px;width:1.5px;height:33.0px;background:#1c252b;"></div>
<div class="r" style="left:1987.0px;top:226.0px;width:1.5px;height:33.0px;background:#1c252b;"></div>
<div class="t" style="left:1406.5px;top:232.7px;color:#fff;font-size:21px;line-height:24px;transform-origin:0 19.3px;transform:scaleY(1.2)">Position</div>
<div class="t" style="left:1705.8px;top:232.7px;color:#fff;font-size:21px;line-height:24px;transform-origin:0 19.3px;transform:scaleY(1.2)">Guns/turret</div>
<div class="t" style="left:1845.0px;top:232.7px;color:#fff;font-size:21px;line-height:24px;transform-origin:0 19.3px;transform:scaleY(1.2)">Weight/turret</div>
<div class="t" style="left:1404.0px;top:264.7px;color:#fff;font-size:21px;line-height:24px;transform-origin:0 19.3px;transform:scaleY(1.2)">A - Forward</div>
<div class="t" style="left:1705.5px;top:264.7px;color:#fff;font-size:21px;line-height:24px;transform-origin:0 19.3px;transform:scaleY(1.2)">2</div>
<div class="t" style="left:1845.0px;top:264.7px;color:#fff;font-size:21px;line-height:24px;transform-origin:0 19.3px;transform:scaleY(1.2)">1975</div>
<div class="t" style="left:1404.0px;top:295.0px;color:#fff;font-size:21px;line-height:24px;transform-origin:0 19.3px;transform:scaleY(1.2)">Y - Aft</div>
<div class="t" style="left:1705.5px;top:295.0px;color:#fff;font-size:21px;line-height:24px;transform-origin:0 19.3px;transform:scaleY(1.2)">2</div>
<div class="t" style="left:1845.0px;top:295.0px;color:#fff;font-size:21px;line-height:24px;transform-origin:0 19.3px;transform:scaleY(1.2)">1975</div>
<div class="t" style="left:1404.0px;top:325.3px;color:#fff;font-size:21px;line-height:24px;transform-origin:0 19.3px;transform:scaleY(1.2)">X - Aft superimposed</div>
<div class="t" style="left:1705.5px;top:325.3px;color:#fff;font-size:21px;line-height:24px;transform-origin:0 19.3px;transform:scaleY(1.2)">3</div>
<div class="t" style="left:1845.0px;top:325.3px;color:#fff;font-size:21px;line-height:24px;transform-origin:0 19.3px;transform:scaleY(1.2)">2835</div>
<div class="t" style="left:1404.0px;top:355.6px;color:#fff;font-size:21px;line-height:24px;transform-origin:0 19.3px;transform:scaleY(1.2)">B - Forward superimposed</div>
<div class="t" style="left:1705.5px;top:355.6px;color:#fff;font-size:21px;line-height:24px;transform-origin:0 19.3px;transform:scaleY(1.2)">3</div>
<div class="t" style="left:1845.0px;top:355.6px;color:#fff;font-size:21px;line-height:24px;transform-origin:0 19.3px;transform:scaleY(1.2)">2967</div>
<div class="r" style="left:1396.0px;top:544.0px;width:130.0px;height:33.8px;background:#283238;"></div>
<div class="t" style="left:1161.0px;width:600px;text-align:center;top:550.6px;color:#fff;font-size:21px;line-height:24px;transform-origin:0 19.3px;transform:scaleY(1.2)">Add turret</div>
<div class="r" style="left:1556.0px;top:544.0px;width:130.0px;height:33.8px;background:#283238;"></div>
<div class="t" style="left:1321.0px;width:600px;text-align:center;top:550.6px;color:#fff;font-size:21px;line-height:24px;transform-origin:0 19.3px;transform:scaleY(1.2)">Delete turret</div>
<div class="r" style="left:1716.0px;top:544.0px;width:130.0px;height:33.8px;background:#283238;"></div>
<div class="t" style="left:1481.0px;width:600px;text-align:center;top:550.6px;color:#fff;font-size:21px;line-height:24px;transform-origin:0 19.3px;transform:scaleY(1.2)">Clear turrets</div>
<div class="r" style="left:1876.0px;top:544.0px;width:130.0px;height:33.8px;background:#303d45;"></div>
<div class="t" style="left:1641.0px;width:600px;text-align:center;top:550.6px;color:#8f8b89;font-size:21px;line-height:24px;transform-origin:0 19.3px;transform:scaleY(1.2)">Rebuild?</div>
<div class="t" style="left:1398.5px;top:603.3px;color:#fff;font-size:21px;line-height:24px;transform-origin:0 19.3px;transform:scaleY(1.2)">Rounds per gun</div>
<div class="r" style="left:1572.0px;top:592.6px;width:97.7px;height:35.8px;background:#4a5862;border:2px solid #252e34;"></div>
<div class="r" style="left:1636.7px;top:594.6px;width:31.0px;height:31.8px;background:#37474f;box-shadow:inset -1px -1px 0 #45535c;"></div>
<div class="t" style="left:1577.0px;top:597.8px;color:#fff;font-size:21px;line-height:24px;transform-origin:0 19.3px;transform:scaleY(1.2)">110</div>
<svg class="r" style="left:1645.2px;top:598.5px" width="14" height="8"><path d="M0,8 L7.0,0 L14,8 Z" fill="#fff"/></svg>
<svg class="r" style="left:1645.2px;top:614.0px" width="14" height="8"><path d="M0,0 L7.0,8 L14,0 Z" fill="#fff"/></svg>
<div class="t" style="left:1691.4px;top:605.3px;color:#fff;font-size:21px;line-height:24px;transform-origin:0 19.3px;transform:scaleY(1.2)">ammo weight</div>
<div class="r" style="left:1844.0px;top:600.0px;width:98.0px;height:33.6px;border:1px solid #fff;border-top-color:#a3a7a9;border-left-color:#a3a7a9"></div>
<div class="t" style="left:1335.5px;width:600px;text-align:right;top:603.7px;color:#fff;font-size:21px;line-height:24px;transform-origin:0 19.3px;transform:scaleY(1.2)">3228</div>
<div class="t" style="left:1398.5px;top:660.1px;color:#fff;font-size:21px;line-height:24px;transform-origin:0 19.3px;transform:scaleY(1.2)">Fire control</div>
<div class="r" style="left:1516.6px;top:652.5px;width:257.0px;height:32.7px;background:#4a5862;border:2px solid #252e34;"></div>
<div class="t" style="left:1522.6px;top:657.5px;color:#fff;font-size:21px;line-height:24px;transform-origin:0 19.3px;transform:scaleY(1.2)">Advanced director</div>
<svg class="r" style="left:1743.6px;top:662.9px" width="24" height="12"><path d="M1,1 L12.0,11 L23,1" fill="none" stroke="#d3d8db" stroke-width="2.2"/></svg>
<div class="t" style="left:1798.7px;top:656.7px;color:#fff;font-size:21px;line-height:24px;transform-origin:0 19.3px;transform:scaleY(1.2)">FC Positions</div>
<div class="r" style="left:1924.4px;top:648.4px;width:81.6px;height:36.1px;background:#4a5862;border:2px solid #252e34;"></div>
<div class="r" style="left:1973.0px;top:650.4px;width:31.0px;height:32.1px;background:#37474f;box-shadow:inset -1px -1px 0 #45535c;"></div>
<div class="t" style="left:1929.4px;top:653.6px;color:#fff;font-size:21px;line-height:24px;transform-origin:0 19.3px;transform:scaleY(1.2)">2</div>
<svg class="r" style="left:1981.5px;top:654.5px" width="14" height="8"><path d="M0,8 L7.0,0 L14,8 Z" fill="#fff"/></svg>
<svg class="r" style="left:1981.5px;top:670.0px" width="14" height="8"><path d="M0,0 L7.0,8 L14,0 Z" fill="#fff"/></svg>
<div class="t" style="left:1400.6px;top:708.2px;color:#fff;font-size:21px;line-height:24px;transform-origin:0 19.3px;transform:scaleY(1.2)">weight</div>
<div class="r" style="left:1520.0px;top:706.0px;width:82.0px;height:33.6px;border:1px solid #fff;border-top-color:#a3a7a9;border-left-color:#a3a7a9"></div>
<div class="t" style="left:995.5px;width:600px;text-align:right;top:709.7px;color:#fff;font-size:21px;line-height:24px;transform-origin:0 19.3px;transform:scaleY(1.2)">170</div>
<div class="t" style="left:1625.0px;top:708.2px;color:#fff;font-size:21px;line-height:24px;transform-origin:0 19.3px;transform:scaleY(1.2)">cost</div>
<div class="r" style="left:1683.8px;top:706.0px;width:82.2px;height:33.6px;border:1px solid #fff;border-top-color:#a3a7a9;border-left-color:#a3a7a9"></div>
<div class="t" style="left:1159.5px;width:600px;text-align:right;top:709.7px;color:#fff;font-size:21px;line-height:24px;transform-origin:0 19.3px;transform:scaleY(1.2)">1,875</div>
<div class="r" style="left:1414.0px;top:763.7px;width:30.0px;height:30.0px;background:#3e4e58;border:4px solid #a8b4ba;"></div>
<svg class="r" style="left:1414.0px;top:763.7px" width="30" height="30"><path d="M4.5,15 L12.3,23.5 L25.5,7" fill="none" stroke="#fff" stroke-width="3.4"/></svg>
<div class="t" style="left:1449.5px;top:767.7px;color:#fff;font-size:21px;line-height:24px;transform-origin:0 19.3px;transform:scaleY(1.2)">Increased elevation</div>
<div class="r" style="left:1686.0px;top:766.4px;width:30.0px;height:30.0px;background:#3e4e58;border:4px solid #7a868c;"></div>
<div class="t" style="left:1721.3px;top:770.7px;color:#8f8b89;font-size:21px;line-height:24px;transform-origin:0 19.3px;transform:scaleY(1.2)">DP</div>
<div class="r" style="left:1414.0px;top:806.0px;width:30.0px;height:30.0px;background:#3e4e58;border:4px solid #a8b4ba;"></div>
<div class="t" style="left:1449.5px;top:810.7px;color:#fff;font-size:21px;line-height:24px;transform-origin:0 19.3px;transform:scaleY(1.2)">Cross deck fire</div>
<div class="r" style="left:1686.0px;top:806.0px;width:30.0px;height:30.0px;background:#3e4e58;border:4px solid #7a868c;"></div>
<div class="t" style="left:1721.3px;top:810.7px;color:#8f8b89;font-size:21px;line-height:24px;transform-origin:0 19.3px;transform:scaleY(1.2)">Autoloader</div>
<div class="r" style="left:1386.8px;top:847.7px;width:628.0px;height:2.0px;background:#0d1114;"></div>
<div class="t" style="left:1404.0px;top:857.9px;color:#fff;font-size:21px;line-height:24px;transform-origin:0 19.3px;transform:scaleY(1.2)">Turret era</div>
<div class="r" style="left:1406.5px;top:888.6px;width:326.9px;height:32.4px;background:#4a5862;border:2px solid #252e34;"></div>
<div class="t" style="left:1412.5px;top:893.6px;color:#fff;font-size:21px;line-height:24px;transform-origin:0 19.3px;transform:scaleY(1.2)">Dreadnought</div>
<svg class="r" style="left:1703.4px;top:898.8px" width="24" height="12"><path d="M1,1 L12.0,11 L23,1" fill="none" stroke="#d3d8db" stroke-width="2.2"/></svg>
<div class="t" style="left:1765.0px;top:895.7px;color:#fff;font-size:21px;line-height:24px;transform-origin:0 19.3px;transform:scaleY(1.2)">Sponson radius</div>
<div class="r" style="left:1924.4px;top:888.2px;width:33.3px;height:33.1px;border:1px solid #fff;border-top-color:#a3a7a9;border-left-color:#a3a7a9"></div>
<div class="t" style="left:1351.2px;width:600px;text-align:right;top:891.9px;color:#fff;font-size:21px;line-height:24px;transform-origin:0 19.3px;transform:scaleY(1.2)">7</div>
<svg class="r" style="left:1982.0px;top:890.5px" width="14" height="8"><path d="M0,8 L7.0,0 L14,8 Z" fill="#fff"/></svg>
<svg class="r" style="left:1982.0px;top:913.5px" width="14" height="8"><path d="M0,0 L7.0,8 L14,0 Z" fill="#fff"/></svg>
<div class="r" style="left:1402.0px;top:946.0px;width:30.0px;height:30.0px;background:#3e4e58;border:4px solid #a8b4ba;"></div>
<div class="t" style="left:1437.4px;top:950.7px;color:#fff;font-size:21px;line-height:24px;transform-origin:0 19.3px;transform:scaleY(1.2)">Asymmetric turret positions</div>
<div class="r" style="left:1390.0px;top:1031.0px;width:12.0px;height:1.0px;background:#66737a;"></div>
<div class="r" style="left:1730.5px;top:1031.0px;width:285.5px;height:1.0px;background:#66737a;"></div>
<div class="r" style="left:1390.0px;top:1031.0px;width:1.0px;height:264.5px;background:#66737a;"></div>
<div class="r" style="left:2015.0px;top:1031.0px;width:1.0px;height:264.5px;background:#66737a;"></div>
<div class="r" style="left:1390.0px;top:1294.5px;width:626.0px;height:1.0px;background:#66737a;"></div>
<div class="t" style="left:1407.0px;top:1018.1px;color:#fff;font-size:21px;line-height:24px;transform-origin:0 19.3px;transform:scaleY(1.2)">Medium and light anti aircraft guns</div>
<div class="t" style="left:1696.0px;top:1044.3px;color:#fff;font-size:21px;line-height:24px;transform-origin:0 19.3px;transform:scaleY(1.2)">Weight</div>
<div class="t" style="left:1774.0px;top:1044.3px;color:#fff;font-size:21px;line-height:24px;transform-origin:0 19.3px;transform:scaleY(1.2)">Cost</div>
<div class="t" style="left:1406.5px;top:1080.7px;color:#fff;font-size:21px;line-height:24px;transform-origin:0 19.3px;transform:scaleY(1.2)">Light AA guns</div>
<div class="r" style="left:1574.4px;top:1072.7px;width:97.1px;height:35.6px;background:#4a5862;border:2px solid #252e34;"></div>
<div class="r" style="left:1638.5px;top:1074.7px;width:31.0px;height:31.6px;background:#37474f;box-shadow:inset -1px -1px 0 #45535c;"></div>
<div class="t" style="left:1579.4px;top:1077.9px;color:#fff;font-size:21px;line-height:24px;transform-origin:0 19.3px;transform:scaleY(1.2)">16</div>
<svg class="r" style="left:1647.0px;top:1078.5px" width="14" height="8"><path d="M0,8 L7.0,0 L14,8 Z" fill="#fff"/></svg>
<svg class="r" style="left:1647.0px;top:1094.0px" width="14" height="8"><path d="M0,0 L7.0,8 L14,0 Z" fill="#fff"/></svg>
<div class="r" style="left:1690.0px;top:1076.3px;width:62.0px;height:33.5px;border:1px solid #fff;border-top-color:#a3a7a9;border-left-color:#a3a7a9"></div>
<div class="t" style="left:1145.5px;width:600px;text-align:right;top:1080.0px;color:#fff;font-size:21px;line-height:24px;transform-origin:0 19.3px;transform:scaleY(1.2)">18</div>
<div class="r" style="left:1766.0px;top:1076.3px;width:66.0px;height:33.5px;border:1px solid #fff;border-top-color:#a3a7a9;border-left-color:#a3a7a9"></div>
<div class="t" style="left:1225.5px;width:600px;text-align:right;top:1080.0px;color:#fff;font-size:21px;line-height:24px;transform-origin:0 19.3px;transform:scaleY(1.2)">36</div>
<div class="t" style="left:1406.5px;top:1142.4px;color:#fff;font-size:21px;line-height:24px;transform-origin:0 19.3px;transform:scaleY(1.2)">Medium AA guns</div>
<div class="r" style="left:1574.4px;top:1132.7px;width:97.1px;height:35.6px;background:#4a5862;border:2px solid #252e34;"></div>
<div class="r" style="left:1638.5px;top:1134.7px;width:31.0px;height:31.6px;background:#37474f;box-shadow:inset -1px -1px 0 #45535c;"></div>
<div class="t" style="left:1579.4px;top:1137.9px;color:#fff;font-size:21px;line-height:24px;transform-origin:0 19.3px;transform:scaleY(1.2)">10</div>
<svg class="r" style="left:1647.0px;top:1138.5px" width="14" height="8"><path d="M0,8 L7.0,0 L14,8 Z" fill="#fff"/></svg>
<svg class="r" style="left:1647.0px;top:1154.0px" width="14" height="8"><path d="M0,0 L7.0,8 L14,0 Z" fill="#fff"/></svg>
<div class="r" style="left:1690.0px;top:1135.5px;width:62.0px;height:33.5px;border:1px solid #fff;border-top-color:#a3a7a9;border-left-color:#a3a7a9"></div>
<div class="t" style="left:1145.5px;width:600px;text-align:right;top:1139.2px;color:#fff;font-size:21px;line-height:24px;transform-origin:0 19.3px;transform:scaleY(1.2)">32</div>
<div class="r" style="left:1766.0px;top:1135.5px;width:66.0px;height:33.5px;border:1px solid #fff;border-top-color:#a3a7a9;border-left-color:#a3a7a9"></div>
<div class="t" style="left:1225.5px;width:600px;text-align:right;top:1139.2px;color:#fff;font-size:21px;line-height:24px;transform-origin:0 19.3px;transform:scaleY(1.2)">64</div>
<div class="t" style="left:1406.5px;top:1196.7px;color:#fff;font-size:21px;line-height:24px;transform-origin:0 19.3px;transform:scaleY(1.2)">AA directors</div>
<div class="r" style="left:1574.4px;top:1190.8px;width:97.1px;height:35.6px;background:#4a5862;border:2px solid #252e34;"></div>
<div class="r" style="left:1638.5px;top:1192.8px;width:31.0px;height:31.6px;background:#37474f;box-shadow:inset -1px -1px 0 #45535c;"></div>
<div class="t" style="left:1579.4px;top:1196.0px;color:#fff;font-size:21px;line-height:24px;transform-origin:0 19.3px;transform:scaleY(1.2)">4</div>
<svg class="r" style="left:1647.0px;top:1196.6px" width="14" height="8"><path d="M0,8 L7.0,0 L14,8 Z" fill="#fff"/></svg>
<svg class="r" style="left:1647.0px;top:1212.1px" width="14" height="8"><path d="M0,0 L7.0,8 L14,0 Z" fill="#fff"/></svg>
<div class="r" style="left:1690.0px;top:1194.5px;width:62.0px;height:33.5px;border:1px solid #fff;border-top-color:#a3a7a9;border-left-color:#a3a7a9"></div>
<div class="t" style="left:1145.5px;width:600px;text-align:right;top:1198.2px;color:#fff;font-size:21px;line-height:24px;transform-origin:0 19.3px;transform:scaleY(1.2)">104</div>
<div class="r" style="left:1766.0px;top:1194.5px;width:66.0px;height:33.5px;border:1px solid #fff;border-top-color:#a3a7a9;border-left-color:#a3a7a9"></div>
<div class="t" style="left:1225.5px;width:600px;text-align:right;top:1198.2px;color:#fff;font-size:21px;line-height:24px;transform-origin:0 19.3px;transform:scaleY(1.2)">208</div>
<div class="r" style="left:1858.0px;top:1079.0px;width:30.0px;height:30.0px;background:#3e4e58;border:4px solid #7a868c;"></div>
<div class="t" style="left:1893.5px;top:1083.7px;color:#8f8b89;font-size:21px;line-height:24px;transform-origin:0 19.3px;transform:scaleY(1.2)">CIWS</div>
<div class="r" style="left:1859.7px;top:1139.0px;width:30.0px;height:30.0px;background:#3e4e58;border:4px solid #7a868c;"></div>
<div class="t" style="left:1896.0px;top:1143.7px;color:#8f8b89;font-size:21px;line-height:24px;transform-origin:0 19.3px;transform:scaleY(1.2)">Radar dir</div>
<div class="t" style="left:1379.0px;top:1320.5px;color:#fff;font-size:21px;line-height:24px;transform-origin:0 19.3px;transform:scaleY(1.2)">HAA factor: 41</div>
<div class="r" style="left:1810.0px;top:1312.6px;width:209.6px;height:37.0px;background:#283238;"></div>
<div class="t" style="left:1614.8px;width:600px;text-align:center;top:1320.8px;color:#fff;font-size:21px;line-height:24px;transform-origin:0 19.3px;transform:scaleY(1.2)">Clear all armament</div>
<div class="r" style="left:2036.7px;top:142.3px;width:12.3px;height:1.0px;background:#66737a;"></div>
<div class="r" style="left:2207.5px;top:142.3px;width:470.5px;height:1.0px;background:#66737a;"></div>
<div class="r" style="left:2036.7px;top:142.3px;width:1.0px;height:573.2px;background:#66737a;"></div>
<div class="r" style="left:2677.0px;top:142.3px;width:1.0px;height:573.2px;background:#66737a;"></div>
<div class="r" style="left:2036.7px;top:714.5px;width:641.3px;height:1.0px;background:#66737a;"></div>
<div class="t" style="left:2053.0px;top:130.7px;color:#fff;font-size:21px;line-height:24px;transform-origin:0 19.3px;transform:scaleY(1.2)">Secondary guns</div>
<div class="t" style="left:2052.7px;top:176.7px;color:#fff;font-size:21px;line-height:24px;transform-origin:0 19.3px;transform:scaleY(1.2)">Calibre</div>
<div class="r" style="left:2148.4px;top:166.7px;width:97.0px;height:35.3px;background:#4a5862;border:2px solid #252e34;"></div>
<div class="r" style="left:2212.4px;top:168.7px;width:31.0px;height:31.3px;background:#37474f;box-shadow:inset -1px -1px 0 #45535c;"></div>
<div class="t" style="left:2153.4px;top:171.9px;color:#fff;font-size:21px;line-height:24px;transform-origin:0 19.3px;transform:scaleY(1.2)">4</div>
<svg class="r" style="left:2220.9px;top:172.3px" width="14" height="8"><path d="M0,8 L7.0,0 L14,8 Z" fill="#fff"/></svg>
<svg class="r" style="left:2220.9px;top:187.8px" width="14" height="8"><path d="M0,0 L7.0,8 L14,0 Z" fill="#fff"/></svg>
<div class="t" style="left:2268.8px;top:176.7px;color:#fff;font-size:21px;line-height:24px;transform-origin:0 19.3px;transform:scaleY(1.2)">Number</div>
<div class="r" style="left:2356.6px;top:164.3px;width:96.4px;height:35.7px;background:#4a5862;border:2px solid #252e34;"></div>
<div class="r" style="left:2420.0px;top:166.3px;width:31.0px;height:31.7px;background:#37474f;box-shadow:inset -1px -1px 0 #45535c;"></div>
<div class="t" style="left:2361.6px;top:169.5px;color:#fff;font-size:21px;line-height:24px;transform-origin:0 19.3px;transform:scaleY(1.2)">20</div>
<svg class="r" style="left:2428.5px;top:170.2px" width="14" height="8"><path d="M0,8 L7.0,0 L14,8 Z" fill="#fff"/></svg>
<svg class="r" style="left:2428.5px;top:185.7px" width="14" height="8"><path d="M0,0 L7.0,8 L14,0 Z" fill="#fff"/></svg>
<div class="t" style="left:2470.8px;top:173.2px;color:#fff;font-size:21px;line-height:24px;transform-origin:0 19.3px;transform:scaleY(1.2)">Quality</div>
<div class="r" style="left:2548.3px;top:170.0px;width:49.5px;height:33.5px;border:1px solid #fff;border-top-color:#a3a7a9;border-left-color:#a3a7a9"></div>
<div class="t" style="left:1991.3px;width:600px;text-align:right;top:173.7px;color:#fff;font-size:21px;line-height:24px;transform-origin:0 19.3px;transform:scaleY(1.2)">0</div>
<div class="t" style="left:2052.7px;top:238.6px;color:#fff;font-size:21px;line-height:24px;transform-origin:0 19.3px;transform:scaleY(1.2)">Guns / turret</div>
<div class="r" style="left:2188.7px;top:233.0px;width:130.0px;height:32.4px;background:#4a5862;border:2px solid #252e34;"></div>
<div class="t" style="left:2194.7px;top:238.0px;color:#fff;font-size:21px;line-height:24px;transform-origin:0 19.3px;transform:scaleY(1.2)">2</div>
<svg class="r" style="left:2288.7px;top:243.2px" width="24" height="12"><path d="M1,1 L12.0,11 L23,1" fill="none" stroke="#d3d8db" stroke-width="2.2"/></svg>
<div class="t" style="left:2343.5px;top:242.0px;color:#fff;font-size:21px;line-height:24px;transform-origin:0 19.3px;transform:scaleY(1.2)">weight</div>
<div class="r" style="left:2417.8px;top:236.0px;width:85.7px;height:33.2px;border:1px solid #fff;border-top-color:#a3a7a9;border-left-color:#a3a7a9"></div>
<div class="t" style="left:1897.0px;width:600px;text-align:right;top:239.7px;color:#fff;font-size:21px;line-height:24px;transform-origin:0 19.3px;transform:scaleY(1.2)">436</div>
<div class="r" style="left:2530.4px;top:230.3px;width:30.0px;height:30.0px;background:#3e4e58;border:4px solid #7a868c;"></div>
<div class="t" style="left:2565.5px;top:234.4px;color:#8f8b89;font-size:21px;line-height:24px;transform-origin:0 19.3px;transform:scaleY(1.2)">Autoloader</div>
<div class="t" style="left:2054.8px;top:292.9px;color:#fff;font-size:21px;line-height:24px;transform-origin:0 19.3px;transform:scaleY(1.2)">Rounds per gun</div>
<div class="r" style="left:2224.4px;top:287.0px;width:97.1px;height:35.2px;background:#4a5862;border:2px solid #252e34;"></div>
<div class="r" style="left:2288.5px;top:289.0px;width:31.0px;height:31.2px;background:#37474f;box-shadow:inset -1px -1px 0 #45535c;"></div>
<div class="t" style="left:2229.4px;top:292.2px;color:#fff;font-size:21px;line-height:24px;transform-origin:0 19.3px;transform:scaleY(1.2)">220</div>
<svg class="r" style="left:2297.0px;top:292.6px" width="14" height="8"><path d="M0,8 L7.0,0 L14,8 Z" fill="#fff"/></svg>
<svg class="r" style="left:2297.0px;top:308.1px" width="14" height="8"><path d="M0,0 L7.0,8 L14,0 Z" fill="#fff"/></svg>
<div class="t" style="left:2343.5px;top:292.9px;color:#fff;font-size:21px;line-height:24px;transform-origin:0 19.3px;transform:scaleY(1.2)">weight</div>
<div class="r" style="left:2417.8px;top:284.4px;width:85.7px;height:33.0px;border:1px solid #fff;border-top-color:#a3a7a9;border-left-color:#a3a7a9"></div>
<div class="t" style="left:1897.0px;width:600px;text-align:right;top:288.1px;color:#fff;font-size:21px;line-height:24px;transform-origin:0 19.3px;transform:scaleY(1.2)">230</div>
<div class="r" style="left:2530.4px;top:266.5px;width:30.0px;height:30.0px;background:#3e4e58;border:4px solid #a8b4ba;"></div>
<svg class="r" style="left:2530.4px;top:266.5px" width="30" height="30"><path d="M4.5,15 L12.3,23.5 L25.5,7" fill="none" stroke="#fff" stroke-width="3.4"/></svg>
<div class="t" style="left:2565.5px;top:271.0px;color:#fff;font-size:21px;line-height:24px;transform-origin:0 19.3px;transform:scaleY(1.2)">Director</div>
<div class="r" style="left:2530.4px;top:302.6px;width:30.0px;height:30.0px;background:#3e4e58;border:4px solid #a8b4ba;"></div>
<svg class="r" style="left:2530.4px;top:302.6px" width="30" height="30"><path d="M4.5,15 L12.3,23.5 L25.5,7" fill="none" stroke="#fff" stroke-width="3.4"/></svg>
<div class="t" style="left:2565.5px;top:307.2px;color:#fff;font-size:21px;line-height:24px;transform-origin:0 19.3px;transform:scaleY(1.2)">DP</div>
<div class="r" style="left:2052.7px;top:342.9px;width:608.8px;height:204.7px;border:2px solid #252e34;background:#4a5862;overflow:hidden">
<div class="t" style="left:2.5px;top:1.0px;color:#fff;font-size:21px;line-height:24px;transform-origin:0 19.3px;transform:scaleY(1.2)">d - Port secondary, 2 guns</div>
<div class="t" style="left:2.5px;top:26.8px;color:#fff;font-size:21px;line-height:24px;transform-origin:0 19.3px;transform:scaleY(1.2)">F - Port wing, 2 guns</div>
<div class="t" style="left:2.5px;top:52.6px;color:#fff;font-size:21px;line-height:24px;transform-origin:0 19.3px;transform:scaleY(1.2)">H - Port midships wing, 2 guns</div>
<div class="t" style="left:2.5px;top:78.4px;color:#fff;font-size:21px;line-height:24px;transform-origin:0 19.3px;transform:scaleY(1.2)">J - Port wing, 2 guns</div>
<div class="t" style="left:2.5px;top:104.2px;color:#fff;font-size:21px;line-height:24px;transform-origin:0 19.3px;transform:scaleY(1.2)">s - Port secondary, 2 guns</div>
<div class="t" style="left:2.5px;top:130.0px;color:#fff;font-size:21px;line-height:24px;transform-origin:0 19.3px;transform:scaleY(1.2)">K - Starboard wing, 2 guns</div>
<div class="t" style="left:2.5px;top:155.8px;color:#fff;font-size:21px;line-height:24px;transform-origin:0 19.3px;transform:scaleY(1.2)">I - Starboard midships wing, 2 guns</div>
<div class="t" style="left:2.5px;top:181.6px;color:#fff;font-size:21px;line-height:24px;transform-origin:0 19.3px;transform:scaleY(1.2)">G - Starboard wing, 2 guns</div>
</div>
<div class="r" style="left:2626.0px;top:344.9px;width:33.5px;height:200.7px;background:#37474f;"></div>
<div class="r" style="left:2627.7px;top:378.3px;width:31.0px;height:93.7px;background:#5f6c74;"></div>
<svg class="r" style="left:2634.0px;top:357.9px" width="18" height="10"><path d="M1,9 L9.0,1 L17,9" fill="none" stroke="#fff" stroke-width="2.6"/></svg>
<svg class="r" style="left:2634.0px;top:522.6px" width="18" height="10"><path d="M1,1 L9.0,9 L17,1" fill="none" stroke="#fff" stroke-width="2.6"/></svg>
<div class="t" style="left:2050.3px;top:555.1px;color:#fff;font-size:21px;line-height:24px;transform-origin:0 19.3px;transform:scaleY(1.2)">Turret era</div>
<div class="r" style="left:2052.7px;top:584.7px;width:326.3px;height:32.7px;background:#4a5862;border:2px solid #252e34;"></div>
<div class="t" style="left:2058.7px;top:589.7px;color:#fff;font-size:21px;line-height:24px;transform-origin:0 19.3px;transform:scaleY(1.2)">Dreadnought</div>
<svg class="r" style="left:2349.0px;top:595.0px" width="24" height="12"><path d="M1,1 L12.0,11 L23,1" fill="none" stroke="#d3d8db" stroke-width="2.2"/></svg>
<div class="t" style="left:2421.0px;top:587.7px;color:#fff;font-size:21px;line-height:24px;transform-origin:0 19.3px;transform:scaleY(1.2)">Sponson radius</div>
<div class="r" style="left:2568.2px;top:580.6px;width:33.8px;height:32.7px;border:1px solid #fff;border-top-color:#a3a7a9;border-left-color:#a3a7a9"></div>
<div class="t" style="left:1995.5px;width:600px;text-align:right;top:584.3px;color:#fff;font-size:21px;line-height:24px;transform-origin:0 19.3px;transform:scaleY(1.2)">0</div>
<svg class="r" style="left:2622.5px;top:582.0px" width="14" height="8"><path d="M0,8 L7.0,0 L14,8 Z" fill="#fff"/></svg>
<svg class="r" style="left:2622.5px;top:606.0px" width="14" height="8"><path d="M0,0 L7.0,8 L14,0 Z" fill="#fff"/></svg>
<div class="r" style="left:2400.3px;top:628.4px;width:255.7px;height:32.7px;background:#283238;"></div>
<div class="t" style="left:2228.2px;width:600px;text-align:center;top:634.5px;color:#fff;font-size:21px;line-height:24px;transform-origin:0 19.3px;transform:scaleY(1.2)">Auto place</div>
<div class="r" style="left:2400.3px;top:672.5px;width:255.7px;height:32.7px;background:#283238;"></div>
<div class="t" style="left:2228.2px;width:600px;text-align:center;top:678.6px;color:#fff;font-size:21px;line-height:24px;transform-origin:0 19.3px;transform:scaleY(1.2)">Add odd centreline mount</div>
<div class="r" style="left:2052.0px;top:649.0px;width:30.0px;height:30.0px;background:#3e4e58;border:4px solid #a8b4ba;"></div>
<div class="t" style="left:2087.0px;top:652.2px;color:#fff;font-size:21px;line-height:24px;transform-origin:0 19.3px;transform:scaleY(1.2)">Asymmetric secondary mounts</div>
<div class="r" style="left:2036.7px;top:750.6px;width:12.3px;height:1.0px;background:#66737a;"></div>
<div class="r" style="left:2176.0px;top:750.6px;width:502.0px;height:1.0px;background:#66737a;"></div>
<div class="r" style="left:2036.7px;top:750.6px;width:1.0px;height:592.4px;background:#66737a;"></div>
<div class="r" style="left:2677.0px;top:750.6px;width:1.0px;height:592.4px;background:#66737a;"></div>
<div class="r" style="left:2036.7px;top:1342.0px;width:641.3px;height:1.0px;background:#66737a;"></div>
<div class="t" style="left:2053.8px;top:738.2px;color:#fff;font-size:21px;line-height:24px;transform-origin:0 19.3px;transform:scaleY(1.2)">Tertiary guns</div>
<div class="t" style="left:2057.0px;top:783.9px;color:#fff;font-size:21px;line-height:24px;transform-origin:0 19.3px;transform:scaleY(1.2)">Calibre</div>
<div class="r" style="left:2148.4px;top:775.0px;width:97.0px;height:35.0px;background:#4a5862;border:2px solid #252e34;"></div>
<div class="r" style="left:2212.4px;top:777.0px;width:31.0px;height:31.0px;background:#37474f;box-shadow:inset -1px -1px 0 #45535c;"></div>
<div class="t" style="left:2153.4px;top:780.2px;color:#fff;font-size:21px;line-height:24px;transform-origin:0 19.3px;transform:scaleY(1.2)">3</div>
<svg class="r" style="left:2220.9px;top:780.5px" width="14" height="8"><path d="M0,8 L7.0,0 L14,8 Z" fill="#fff"/></svg>
<svg class="r" style="left:2220.9px;top:796.0px" width="14" height="8"><path d="M0,0 L7.0,8 L14,0 Z" fill="#fff"/></svg>
<div class="t" style="left:2268.8px;top:783.9px;color:#fff;font-size:21px;line-height:24px;transform-origin:0 19.3px;transform:scaleY(1.2)">Number</div>
<div class="r" style="left:2356.6px;top:773.0px;width:96.4px;height:34.7px;background:#4a5862;border:2px solid #252e34;"></div>
<div class="r" style="left:2420.0px;top:775.0px;width:31.0px;height:30.7px;background:#37474f;box-shadow:inset -1px -1px 0 #45535c;"></div>
<div class="t" style="left:2361.6px;top:778.2px;color:#fff;font-size:21px;line-height:24px;transform-origin:0 19.3px;transform:scaleY(1.2)">12</div>
<svg class="r" style="left:2428.5px;top:778.4px" width="14" height="8"><path d="M0,8 L7.0,0 L14,8 Z" fill="#fff"/></svg>
<svg class="r" style="left:2428.5px;top:793.9px" width="14" height="8"><path d="M0,0 L7.0,8 L14,0 Z" fill="#fff"/></svg>
<div class="t" style="left:2470.8px;top:782.2px;color:#fff;font-size:21px;line-height:24px;transform-origin:0 19.3px;transform:scaleY(1.2)">Quality</div>
<div class="r" style="left:2548.3px;top:778.0px;width:49.5px;height:33.9px;border:1px solid #fff;border-top-color:#a3a7a9;border-left-color:#a3a7a9"></div>
<div class="t" style="left:1991.3px;width:600px;text-align:right;top:781.7px;color:#fff;font-size:21px;line-height:24px;transform-origin:0 19.3px;transform:scaleY(1.2)">1</div>
<div class="t" style="left:2057.0px;top:845.9px;color:#fff;font-size:21px;line-height:24px;transform-origin:0 19.3px;transform:scaleY(1.2)">Guns / turret</div>
<div class="r" style="left:2192.4px;top:841.0px;width:130.8px;height:31.8px;background:#4a5862;border:2px solid #252e34;"></div>
<div class="t" style="left:2198.4px;top:846.0px;color:#fff;font-size:21px;line-height:24px;transform-origin:0 19.3px;transform:scaleY(1.2)">1</div>
<svg class="r" style="left:2293.2px;top:850.9px" width="24" height="12"><path d="M1,1 L12.0,11 L23,1" fill="none" stroke="#d3d8db" stroke-width="2.2"/></svg>
<div class="t" style="left:2341.0px;top:847.7px;color:#fff;font-size:21px;line-height:24px;transform-origin:0 19.3px;transform:scaleY(1.2)">weight</div>
<div class="r" style="left:2417.8px;top:844.5px;width:87.8px;height:33.5px;border:1px solid #fff;border-top-color:#a3a7a9;border-left-color:#a3a7a9"></div>
<div class="t" style="left:1899.1px;width:600px;text-align:right;top:848.2px;color:#fff;font-size:21px;line-height:24px;transform-origin:0 19.3px;transform:scaleY(1.2)">84</div>
<div class="r" style="left:2530.4px;top:838.4px;width:30.0px;height:30.0px;background:#3e4e58;border:4px solid #7a868c;"></div>
<div class="t" style="left:2565.5px;top:842.4px;color:#8f8b89;font-size:21px;line-height:24px;transform-origin:0 19.3px;transform:scaleY(1.2)">Autoloader</div>
<div class="t" style="left:2054.8px;top:899.9px;color:#fff;font-size:21px;line-height:24px;transform-origin:0 19.3px;transform:scaleY(1.2)">Rounds per gun</div>
<div class="r" style="left:2224.4px;top:894.4px;width:97.1px;height:35.5px;background:#4a5862;border:2px solid #252e34;"></div>
<div class="r" style="left:2288.5px;top:896.4px;width:31.0px;height:31.5px;background:#37474f;box-shadow:inset -1px -1px 0 #45535c;"></div>
<div class="t" style="left:2229.4px;top:899.6px;color:#fff;font-size:21px;line-height:24px;transform-origin:0 19.3px;transform:scaleY(1.2)">250</div>
<svg class="r" style="left:2297.0px;top:900.1px" width="14" height="8"><path d="M0,8 L7.0,0 L14,8 Z" fill="#fff"/></svg>
<svg class="r" style="left:2297.0px;top:915.6px" width="14" height="8"><path d="M0,0 L7.0,8 L14,0 Z" fill="#fff"/></svg>
<div class="t" style="left:2343.5px;top:899.2px;color:#fff;font-size:21px;line-height:24px;transform-origin:0 19.3px;transform:scaleY(1.2)">weight</div>
<div class="r" style="left:2417.8px;top:892.0px;width:85.7px;height:33.4px;border:1px solid #fff;border-top-color:#a3a7a9;border-left-color:#a3a7a9"></div>
<div class="t" style="left:1897.0px;width:600px;text-align:right;top:895.7px;color:#fff;font-size:21px;line-height:24px;transform-origin:0 19.3px;transform:scaleY(1.2)">64</div>
<div class="r" style="left:2530.4px;top:886.5px;width:30.0px;height:30.0px;background:#3e4e58;border:4px solid #a8b4ba;"></div>
<svg class="r" style="left:2530.4px;top:886.5px" width="30" height="30"><path d="M4.5,15 L12.3,23.5 L25.5,7" fill="none" stroke="#fff" stroke-width="3.4"/></svg>
<div class="t" style="left:2565.5px;top:890.7px;color:#fff;font-size:21px;line-height:24px;transform-origin:0 19.3px;transform:scaleY(1.2)">DP</div>
<div class="r" style="left:2052.7px;top:972.9px;width:608.8px;height:208.1px;border:2px solid #252e34;background:#4a5862;overflow:hidden">
<div class="t" style="left:2.5px;top:2.2px;color:#fff;font-size:21px;line-height:24px;transform-origin:0 19.3px;transform:scaleY(1.2)">Mount, 1 1 guns</div>
<div class="t" style="left:2.5px;top:28.2px;color:#fff;font-size:21px;line-height:24px;transform-origin:0 19.3px;transform:scaleY(1.2)">Mount, 2 1 guns</div>
<div class="t" style="left:2.5px;top:54.1px;color:#fff;font-size:21px;line-height:24px;transform-origin:0 19.3px;transform:scaleY(1.2)">Mount, 3 1 guns</div>
<div class="t" style="left:2.5px;top:80.1px;color:#fff;font-size:21px;line-height:24px;transform-origin:0 19.3px;transform:scaleY(1.2)">Mount, 4 1 guns</div>
<div class="t" style="left:2.5px;top:106.0px;color:#fff;font-size:21px;line-height:24px;transform-origin:0 19.3px;transform:scaleY(1.2)">Mount, 5 1 guns</div>
<div class="t" style="left:2.5px;top:132.0px;color:#fff;font-size:21px;line-height:24px;transform-origin:0 19.3px;transform:scaleY(1.2)">Mount, 6 1 guns</div>
<div class="t" style="left:2.5px;top:157.9px;color:#fff;font-size:21px;line-height:24px;transform-origin:0 19.3px;transform:scaleY(1.2)">Mount, 7 1 guns</div>
<div class="t" style="left:2.5px;top:183.9px;color:#fff;font-size:21px;line-height:24px;transform-origin:0 19.3px;transform:scaleY(1.2)">Mount, 8 1 guns</div>
</div>
<div class="r" style="left:2626.0px;top:974.9px;width:33.5px;height:204.1px;background:#37474f;"></div>
<div class="r" style="left:2627.7px;top:1006.6px;width:31.0px;height:82.4px;background:#5f6c74;"></div>
<svg class="r" style="left:2634.0px;top:987.9px" width="18" height="10"><path d="M1,9 L9.0,1 L17,9" fill="none" stroke="#fff" stroke-width="2.6"/></svg>
<svg class="r" style="left:2634.0px;top:1156.0px" width="18" height="10"><path d="M1,1 L9.0,9 L17,1" fill="none" stroke="#fff" stroke-width="2.6"/></svg>
<div class="t" style="left:2056.4px;top:1194.4px;color:#fff;font-size:21px;line-height:24px;transform-origin:0 19.3px;transform:scaleY(1.2)">Turret era</div>
<div class="r" style="left:2056.4px;top:1224.6px;width:327.1px;height:32.7px;background:#4a5862;border:2px solid #252e34;"></div>
<div class="t" style="left:2062.4px;top:1229.6px;color:#fff;font-size:21px;line-height:24px;transform-origin:0 19.3px;transform:scaleY(1.2)">Late dreadnought</div>
<svg class="r" style="left:2353.5px;top:1234.9px" width="24" height="12"><path d="M1,1 L12.0,11 L23,1" fill="none" stroke="#d3d8db" stroke-width="2.2"/></svg>
<div class="t" style="left:2421.0px;top:1211.5px;color:#fff;font-size:21px;line-height:24px;transform-origin:0 19.3px;transform:scaleY(1.2)">Sponson radius</div>
<div class="r" style="left:2570.6px;top:1204.6px;width:33.4px;height:32.7px;border:1px solid #fff;border-top-color:#a3a7a9;border-left-color:#a3a7a9"></div>
<div class="t" style="left:1997.5px;width:600px;text-align:right;top:1208.3px;color:#fff;font-size:21px;line-height:24px;transform-origin:0 19.3px;transform:scaleY(1.2)">6</div>
<svg class="r" style="left:2621.8px;top:1206.0px" width="14" height="8"><path d="M0,8 L7.0,0 L14,8 Z" fill="#fff"/></svg>
<svg class="r" style="left:2621.8px;top:1230.0px" width="14" height="8"><path d="M0,0 L7.0,8 L14,0 Z" fill="#fff"/></svg>
<div class="r" style="left:2404.2px;top:1264.6px;width:257.3px;height:32.7px;background:#283238;"></div>
<div class="t" style="left:2232.8px;width:600px;text-align:center;top:1270.7px;color:#fff;font-size:21px;line-height:24px;transform-origin:0 19.3px;transform:scaleY(1.2)">Add mount graphic</div>
<div class="r" style="left:2404.2px;top:1302.8px;width:257.3px;height:32.7px;background:#283238;"></div>
<div class="t" style="left:2232.8px;width:600px;text-align:center;top:1308.9px;color:#fff;font-size:21px;line-height:24px;transform-origin:0 19.3px;transform:scaleY(1.2)">Clear tertiary graphics</div>
<div class="t" style="left:1368.0px;top:1378.7px;color:#fff;font-size:21px;line-height:24px;transform-origin:0 19.3px;transform:scaleY(1.2)">Topside load and capacity</div>
<div class="r" style="left:1654.4px;top:1378.7px;width:169.3px;height:32.7px;border:1px solid #fff;border-top-color:#a3a7a9;border-left-color:#a3a7a9"></div>
<div class="t" style="left:1217.2px;width:600px;text-align:right;top:1382.4px;color:#fff;font-size:21px;line-height:24px;transform-origin:0 19.3px;transform:scaleY(1.2)">212 of 235</div>
<div class="r" style="left:1846.3px;top:1378.0px;width:193.7px;height:33.8px;background:#283238;"></div>
<div class="t" style="left:1643.2px;width:600px;text-align:center;top:1384.6px;color:#fff;font-size:21px;line-height:24px;transform-origin:0 19.3px;transform:scaleY(1.2)">Topside load</div>
<div class="r" style="left:2486.3px;top:1372.0px;width:221.7px;height:59.8px;background:#283238;"></div>
<svg class="r" style="left:2512px;top:1394px" width="16" height="17"><path d="M0,5 L7.5,5 L7.5,0 L16,8.5 L7.5,17 L7.5,12 L0,12 Z" fill="#3d7abf"/></svg>
<div class="t" style="left:2541.6px;top:1392.1px;color:#fff;font-size:21px;line-height:24px;transform-origin:0 19.3px;transform:scaleY(1.2)">Save and finish</div>
</body></html>
